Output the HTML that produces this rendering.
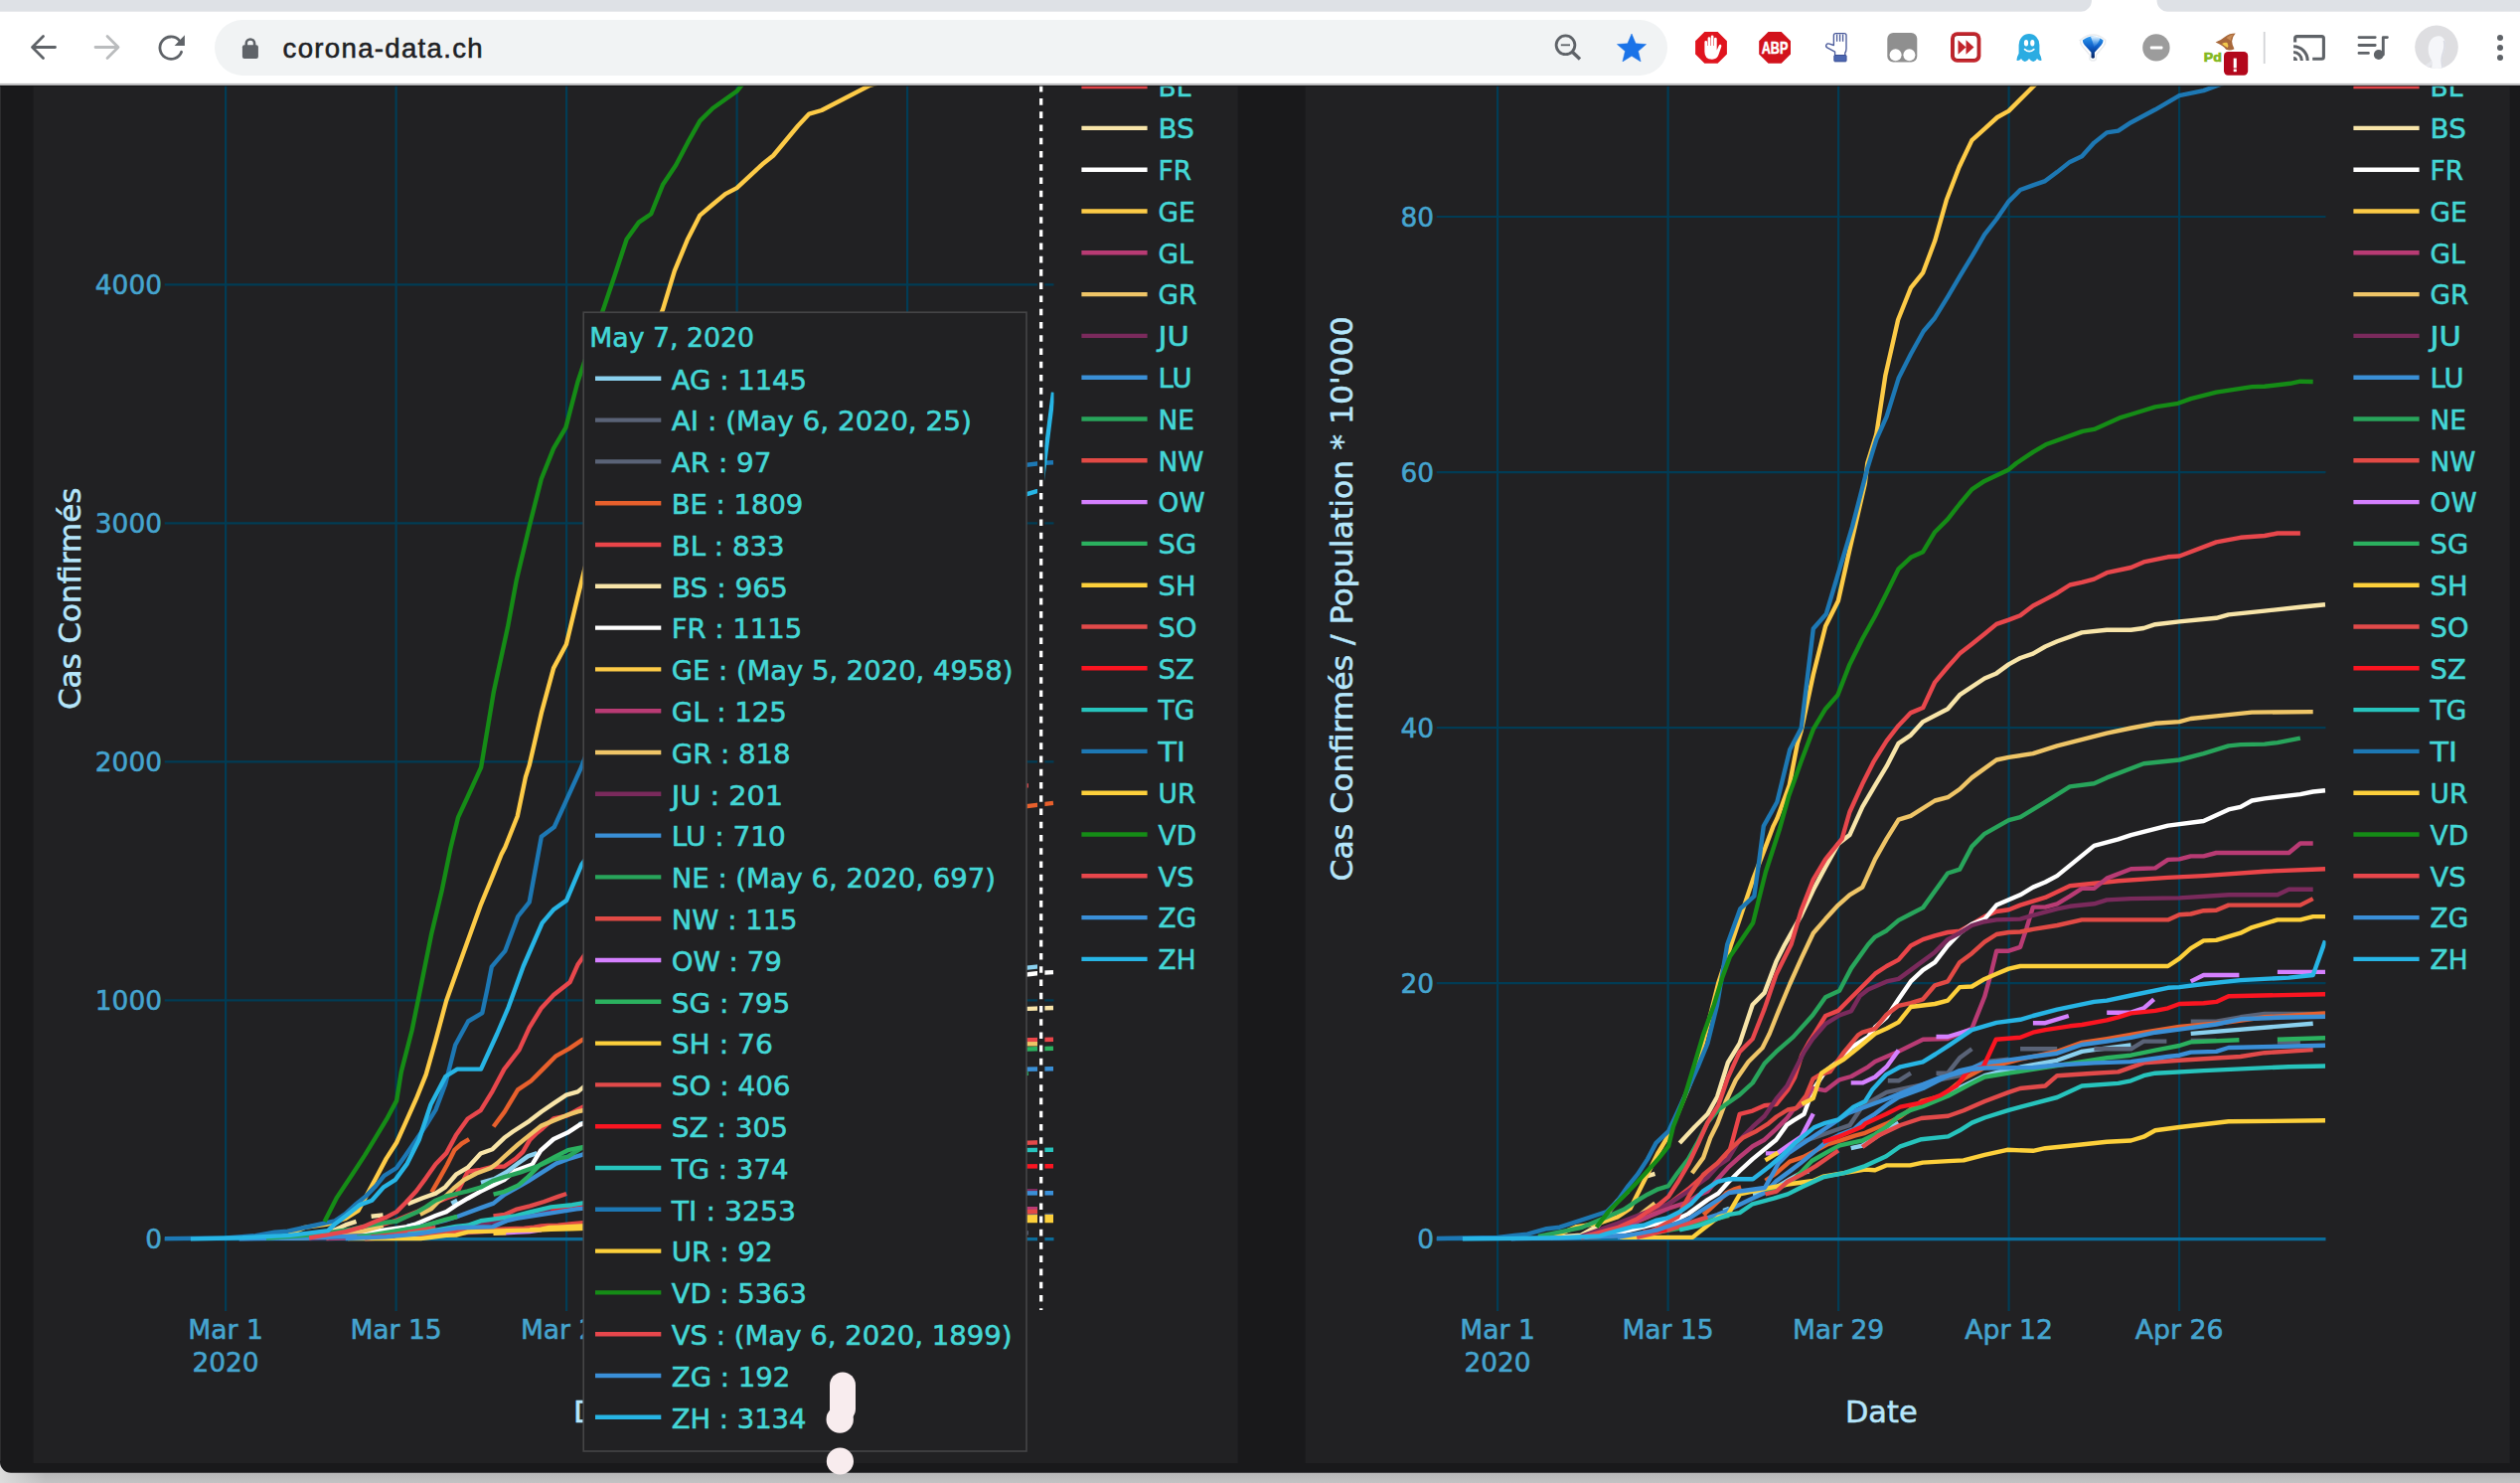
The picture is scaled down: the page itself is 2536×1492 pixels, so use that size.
<!DOCTYPE html>
<html lang="fr"><head><meta charset="utf-8"><title>corona-data.ch</title>
<style>html,body{margin:0;padding:0;background:#b9b9b9;}body{width:2536px;height:1492px;overflow:hidden;}svg{display:block;font-family:"DejaVu Sans", "Liberation Sans", sans-serif;}text{white-space:pre;}</style></head><body>
<svg width="2536" height="1492" viewBox="0 0 2536 1492">
<defs><linearGradient id="shadow" x1="0" y1="0" x2="0" y2="1"><stop offset="0" stop-color="#a6a6a7"/><stop offset="1" stop-color="#c3c3c4"/></linearGradient><linearGradient id="shl" x1="0" y1="0" x2="1" y2="0"><stop offset="0" stop-color="#dedede" stop-opacity="0.95"/><stop offset="1" stop-color="#dedede" stop-opacity="0"/></linearGradient><linearGradient id="fun" x1="0" y1="0" x2="0" y2="1"><stop offset="0" stop-color="#2f9df2"/><stop offset="0.5" stop-color="#0d5bc4"/><stop offset="1" stop-color="#06235f"/></linearGradient><linearGradient id="funhi" x1="0" y1="0" x2="0" y2="1"><stop offset="0" stop-color="#ffffff" stop-opacity="0.95"/><stop offset="1" stop-color="#8cc8ff" stop-opacity="0.1"/></linearGradient><clipPath id="clipabs"><rect x="165.7" y="85.8" width="894.8" height="1240"/></clipPath><clipPath id="cliprel"><rect x="1445.7" y="85.8" width="894.8" height="1240"/></clipPath></defs>
<rect x="0" y="1470" width="2536" height="22" fill="url(#shadow)"/>
<rect x="0" y="1462" width="46" height="30" fill="url(#shl)"/>
<path d="M0,85.8 H2536 V1481.7 H11 A11,11 0 0 1 0,1470.7 Z" fill="#19191b"/>
<rect x="0" y="85.8" width="0.9" height="1384" fill="#303033"/>
<rect x="33.6" y="85.8" width="1212.2" height="1386.2" fill="#212123"/>
<line x1="227.1" y1="85.8" x2="227.1" y2="1319" stroke="#013c55" stroke-width="2.2"/>
<line x1="398.6" y1="85.8" x2="398.6" y2="1319" stroke="#013c55" stroke-width="2.2"/>
<line x1="570.1" y1="85.8" x2="570.1" y2="1319" stroke="#013c55" stroke-width="2.2"/>
<line x1="741.6" y1="85.8" x2="741.6" y2="1319" stroke="#013c55" stroke-width="2.2"/>
<line x1="913.1" y1="85.8" x2="913.1" y2="1319" stroke="#013c55" stroke-width="2.2"/>
<line x1="165.7" y1="286.3" x2="1060.5" y2="286.3" stroke="#013c55" stroke-width="2.2"/>
<line x1="165.7" y1="526.3" x2="1060.5" y2="526.3" stroke="#013c55" stroke-width="2.2"/>
<line x1="165.7" y1="766.3" x2="1060.5" y2="766.3" stroke="#013c55" stroke-width="2.2"/>
<line x1="165.7" y1="1006.3" x2="1060.5" y2="1006.3" stroke="#013c55" stroke-width="2.2"/>
<line x1="165.7" y1="1246.6" x2="1060.5" y2="1246.6" stroke="#0b6d9b" stroke-width="3.1"/>
<g clip-path="url(#clipabs)" fill="none" stroke-width="4.4" stroke-linejoin="round" stroke-linecap="butt">
<polyline stroke="#8ad0ee" points="409.8,1233.6 421.7,1231.4"/>
<polyline stroke="#8ad0ee" points="454.3,1210.6 460.2,1207.7"/>
<polyline stroke="#8ad0ee" points="484.0,1189.9 497.3,1186.1 509.2,1179.5 521.1,1170.6 531.5,1163.1 540.4,1160.2"/>
<polyline stroke="#8ad0ee" points="582.7,1131.0 594.2,1127.8 630.6,1098.6"/>
<polyline stroke="#8ad0ee" points="667.2,1069.4 717.2,1038.6 741.5,1030.5 790.2,1019.1 815.1,1007.8 827.4,1005.5 864.5,999.7"/>
<polyline stroke="#8ad0ee" points="924.7,985.1 1047.7,972.1"/>
<polyline stroke="#5a6377" points="619.8,1241.5 630.6,1241.5 642.9,1241.3"/>
<polyline stroke="#5a6377" points="668.5,1241.3 680.1,1241.3 692.1,1240.8 704.4,1240.6"/>
<polyline stroke="#5a6377" points="753.1,1240.6 790.2,1240.6"/>
<polyline stroke="#5a6377" points="827.4,1240.6 864.5,1240.6 877.3,1240.3 900.4,1240.3"/>
<polyline stroke="#5a6377" points="924.7,1240.3 950.4,1240.3"/>
<polyline stroke="#5a6377" points="1011.9,1240.4 1034.9,1240.4"/>
<polyline stroke="#5a6377" points="521.2,1237.3 532.7,1236.3 544.8,1235.9 569.9,1234.9 581.4,1234.5 594.2,1232.6 618.6,1231.1 655.2,1230.3 667.2,1229.9 692.1,1229.4 717.2,1227.9 741.5,1227.7"/>
<polyline stroke="#5a6377" points="924.7,1223.8 950.4,1223.8 974.7,1223.3 999.0,1223.0 1060.0,1223.0"/>
<polyline stroke="#e8602c" points="311.1,1244.0 354.2,1239.0"/>
<polyline stroke="#e8602c" points="434.3,1199.5 442.4,1185.4 449.9,1172.0 457.3,1157.2 464.7,1150.5 472.1,1146.1"/>
<polyline stroke="#e8602c" points="496.6,1133.5 507.7,1118.6 521.1,1096.4 534.4,1087.5 546.3,1075.6 559.6,1062.3 573.0,1054.8 586.4,1045.9 597.0,1040.5 618.2,1022.8 632.4,1009.1 653.6,979.0 674.9,968.0 696.1,935.2 717.3,913.3 740.0,903.7 753.1,897.0 790.2,882.2 815.1,864.8 840.2,857.4 877.3,845.0 913.2,834.1 962.7,825.2 999.0,815.3 1060.0,807.9"/>
<polyline stroke="#ea4549" points="311.1,1245.5 347.7,1241.5 378.0,1234.5 399.1,1227.5 419.0,1219.4 438.4,1210.1 449.2,1205.4 458.9,1201.9 464.3,1191.5 470.7,1178.7 483.7,1177.0 495.6,1174.0 507.4,1173.5 519.1,1165.7 526.2,1158.8 533.3,1146.6 540.4,1139.7 546.0,1135.2 557.1,1125.5 569.9,1122.7 581.4,1116.5 594.2,1109.6 607.0,1102.7 618.6,1098.6 630.6,1095.1 642.9,1087.5 655.2,1084.1 667.2,1082.0 680.1,1080.2 692.1,1079.5 704.4,1075.8 717.2,1071.7 729.2,1068.9 741.5,1067.9 753.1,1065.4 778.2,1061.3 803.0,1055.1 827.4,1053.7 851.7,1052.3 901.7,1050.5 937.6,1049.6 999.0,1047.2 1060.0,1045.8"/>
<polyline stroke="#f8e5a9" points="280.8,1245.8 311.1,1245.0 328.3,1241.5 347.7,1232.4 358.5,1228.9"/>
<polyline stroke="#f8e5a9" points="373.6,1223.8 385.5,1222.4"/>
<polyline stroke="#f8e5a9" points="410.3,1211.2 425.4,1205.3 438.4,1200.6 448.1,1194.3 458.9,1181.7 470.7,1174.7 483.7,1160.5 495.6,1156.2 507.4,1144.8 516.1,1138.5 532.7,1127.8 544.8,1118.5 557.1,1110.1 569.9,1101.7 581.4,1098.4 594.2,1088.1 607.0,1080.2 618.6,1073.2 630.6,1064.8 642.9,1061.8 655.2,1056.9 680.1,1052.2 692.1,1047.1 717.2,1041.0 729.2,1039.2 741.5,1035.9 753.1,1033.6 765.9,1032.0 778.2,1029.4 790.2,1027.5 815.1,1024.2 840.2,1023.3 864.5,1023.3 877.3,1022.6 888.9,1021.3 913.2,1020.2 950.4,1018.9 962.7,1017.7 999.0,1016.3 1034.9,1014.9 1060.0,1014.0"/>
<polyline stroke="#ffffff" points="311.1,1245.5 347.7,1242.9 388.7,1237.1 408.2,1234.5 419.0,1231.3 438.4,1223.0 449.2,1219.1 458.9,1212.7 470.7,1205.7 483.7,1198.6 495.6,1192.8 507.4,1187.1 518.2,1178.1 524.7,1175.5 535.5,1171.7 544.1,1157.5 557.1,1146.0 571.1,1139.6 583.0,1131.9 600.0,1125.5 607.0,1119.8 618.6,1113.7 630.6,1103.0 642.9,1092.3 655.2,1085.5 667.2,1080.9 680.1,1071.0 692.1,1063.4 704.4,1058.1 717.2,1055.0 729.2,1046.6 753.1,1040.5 765.9,1036.0 778.2,1032.9 790.2,1029.1 827.4,1011.1 851.7,1007.3 864.5,1004.7 901.7,999.1 937.6,996.3 962.7,989.5 974.7,988.0 986.2,984.2 999.0,982.9 1034.9,980.3 1047.7,978.8 1060.0,978.1"/>
<polyline stroke="#fdcb47" points="280.8,1245.6 306.7,1234.9 328.3,1231.9 347.7,1225.9 360.7,1217.8 367.2,1205.8 378.0,1185.7 388.7,1165.6 399.1,1149.5 408.2,1129.4 419.0,1105.2 428.7,1081.1 438.4,1046.9 449.2,1006.7 462.1,970.5 484.1,909.6 496.9,878.6 504.6,859.5 508.4,852.3 520.7,821.3 528.9,781.9 532.7,769.9 544.8,717.4 557.1,672.1 569.9,648.2 581.4,600.5 596.8,538.4 599.3,519.3 608.3,492.3 617.3,437.4 623.7,411.1 630.1,384.9 642.9,355.0 655.2,340.7 667.2,310.9 678.8,272.7 691.6,241.6 704.4,216.6 717.2,205.8 730.0,195.1 741.5,189.1 767.2,165.3 778.2,156.5 803.1,126.5 814.3,114.6 826.8,111.0 875.5,85.8 924.5,72.7 973.4,63.1 1022.3,56.4"/>
<polyline stroke="#b93b74" points="328.3,1246.0 347.7,1245.6 367.2,1245.0 388.7,1244.3 399.1,1244.0 419.0,1243.5 428.7,1243.0 438.4,1242.7 449.2,1241.7 458.9,1240.9 470.7,1240.1 483.7,1239.3 495.6,1238.8 507.4,1238.0 518.2,1237.2 524.7,1236.5 535.5,1236.0 544.1,1234.9 557.1,1235.0 571.1,1234.2 583.0,1234.0 600.0,1233.3 607.0,1232.9 618.6,1232.5 630.6,1232.1 655.2,1231.2 680.1,1231.1 692.1,1230.7 704.4,1230.3 717.2,1227.9 723.6,1226.2 729.2,1224.5 741.5,1224.5 753.1,1224.2 759.5,1222.7 765.9,1221.1 778.2,1221.1 790.2,1220.9 803.0,1220.3 815.1,1219.7 827.4,1219.7 840.2,1218.9 864.5,1218.2 888.9,1218.2 901.7,1217.5 913.2,1217.5 924.7,1217.3 937.6,1217.3 950.4,1217.0 1023.4,1217.0 1034.9,1216.3 1047.7,1216.3"/>
<polyline stroke="#efc567" points="328.3,1245.4 347.7,1242.2 367.2,1238.2 385.5,1233.0"/>
<polyline stroke="#efc567" points="422.8,1221.9 434.2,1216.1 441.2,1208.8 448.3,1203.5 456.8,1195.2 466.7,1187.3 479.5,1180.5 493.6,1175.3 500.7,1170.0 508.4,1162.9 521.2,1151.5 532.7,1142.1 544.8,1132.6 557.1,1127.4 569.9,1122.2 581.4,1118.4 594.2,1115.5 607.0,1105.1 618.6,1097.5 630.6,1090.4 642.9,1089.0 667.2,1083.3 680.1,1082.1 692.1,1079.1 704.4,1074.8 729.2,1068.2 741.5,1067.2 765.9,1065.8 790.2,1063.0 840.2,1058.2 864.5,1056.3 888.9,1054.6 913.2,1054.0 924.7,1052.8 950.4,1051.9 986.2,1050.5 1047.7,1050.3"/>
<polyline stroke="#7a2a5c" points="311.1,1246.0 347.7,1244.2 378.0,1242.6 399.1,1241.5 419.0,1239.8 438.4,1237.8 449.2,1236.2 458.9,1235.3 470.7,1232.7 483.7,1230.9 495.6,1229.4 507.4,1227.1 518.2,1225.3 524.7,1223.5 535.5,1220.6 544.1,1218.8 557.1,1216.7 571.1,1215.5 583.0,1214.9 591.6,1212.9 600.0,1212.0 607.0,1211.6 618.6,1210.9 630.6,1210.5 642.9,1209.3 667.2,1206.8 680.1,1205.1 692.1,1204.2 704.4,1203.2 717.2,1202.6 729.2,1202.4 753.1,1202.3 765.9,1201.8 790.2,1200.9 803.0,1200.5 827.4,1200.2 840.2,1199.6 864.5,1199.5 913.2,1199.4 962.7,1198.9 1011.9,1198.9 1023.4,1198.2 1047.7,1198.2"/>
<polyline stroke="#3a8fd6" points="240.7,1246.2 300.0,1245.5 374.2,1243.3 397.9,1238.8 421.7,1234.4 448.4,1227.7 460.2,1224.0 484.0,1215.1 496.6,1210.6 507.7,1201.7 521.1,1194.3 531.5,1188.4 543.3,1180.9 559.6,1170.6 571.5,1166.1 586.4,1161.7 594.2,1156.0 607.0,1150.1 618.6,1143.2 630.6,1137.4 655.2,1130.5 680.1,1120.7 692.1,1116.8 704.4,1114.8 717.2,1110.9 729.2,1109.9 765.9,1106.0 790.2,1103.4 815.1,1096.8 840.2,1094.2 864.5,1091.3 888.9,1087.3 913.2,1085.0 950.4,1081.1 974.7,1077.1 1011.9,1076.0 1060.0,1075.2"/>
<polyline stroke="#28a55b" points="267.9,1245.5 311.1,1242.6 337.0,1239.1 354.2,1236.6 367.2,1233.7 378.0,1231.6 388.7,1229.8 399.1,1228.7 408.2,1224.4 419.0,1219.8 428.7,1214.1 438.4,1207.7 449.2,1203.4 470.7,1198.4 483.7,1194.5 495.6,1188.1 507.4,1184.1 524.7,1179.1 544.1,1172.0 557.1,1166.0 571.1,1163.8 583.0,1156.3 600.0,1148.5 607.0,1145.9 618.6,1143.8 630.6,1140.4 642.9,1138.3 655.2,1136.2 680.1,1124.8 692.1,1123.5 704.4,1115.9 717.2,1111.6 741.5,1107.1 753.1,1106.1 778.2,1101.0 803.0,1096.0 827.4,1094.9 840.2,1093.0 877.3,1088.3 913.2,1087.1 937.6,1085.0 962.7,1082.4 974.7,1082.0 999.0,1081.8 1011.9,1081.3 1034.9,1079.9"/>
<polyline stroke="#e24a45" points="367.2,1246.2 388.7,1245.4 408.2,1244.5 420.0,1242.8 434.2,1241.1 448.3,1240.2 461.1,1239.1 473.8,1238.1 488.0,1237.6 499.3,1237.0 507.8,1236.4 519.1,1235.9 527.6,1235.8 537.5,1234.7 544.6,1233.4 551.7,1233.0 561.6,1232.8 575.8,1231.2 589.9,1229.9 594.2,1229.6 607.0,1229.3 618.6,1228.2 630.6,1227.5 642.9,1227.3 655.2,1227.0 667.2,1225.8 680.1,1225.5 692.1,1224.0 704.4,1223.3 717.2,1222.3 729.2,1221.7 741.5,1221.5 753.1,1221.5 765.9,1221.3 790.2,1221.0 815.1,1220.5 901.7,1220.5 913.2,1220.1 924.7,1220.1 937.6,1219.8 950.4,1219.8 962.7,1219.3 1034.9,1219.3 1047.7,1218.8"/>
<polyline stroke="#d580ff" points="496.9,1240.2 508.4,1240.2 521.2,1239.6 532.7,1239.1 544.8,1237.4"/>
<polyline stroke="#d580ff" points="582.7,1235.2 594.2,1235.2 607.0,1234.8 618.6,1234.1 630.6,1232.9"/>
<polyline stroke="#d580ff" points="668.5,1232.0 680.1,1232.0 703.1,1231.5"/>
<polyline stroke="#d580ff" points="765.9,1231.0 778.2,1231.0 801.8,1230.5"/>
<polyline stroke="#d580ff" points="840.2,1230.2 864.5,1230.2 877.3,1229.9 887.6,1229.3"/>
<polyline stroke="#d580ff" points="924.7,1228.0 937.6,1227.6 973.4,1227.6"/>
<polyline stroke="#d580ff" points="1011.9,1227.4 1060.0,1227.4"/>
<polyline stroke="#2bb15f" points="359.3,1244.7 423.1,1234.4 433.5,1231.4 448.4,1226.9 460.2,1224.0"/>
<polyline stroke="#2bb15f" points="496.6,1201.7 507.7,1198.8 521.1,1192.8 531.5,1183.9 543.3,1172.0 559.6,1163.1 571.5,1157.2 586.4,1154.2 594.2,1152.6 607.0,1146.6 618.6,1139.3 630.6,1129.5 642.9,1123.5 655.2,1119.8 680.1,1110.1 704.4,1098.0 717.2,1091.9 741.5,1088.2 765.9,1084.6 790.2,1080.9 815.1,1077.3 840.2,1073.7 864.5,1071.2 888.9,1066.4 913.2,1062.0 924.7,1058.6 973.4,1056.6"/>
<polyline stroke="#2bb15f" points="1011.9,1056.2 1060.0,1054.7"/>
<polyline stroke="#fdd03b" points="349.9,1246.1 423.3,1246.1 434.1,1244.8 449.2,1242.9 458.9,1242.6 471.0,1239.4 496.5,1238.6 519.1,1237.9 544.6,1237.4 554.5,1236.7 575.8,1236.2 597.0,1235.6 606.9,1235.7 618.2,1235.0 642.3,1235.0 655.0,1234.6 680.5,1234.3 696.1,1234.2 717.3,1233.4 740.0,1232.6 765.9,1232.7 778.2,1232.4 803.0,1232.0 840.2,1231.4 864.5,1231.2 877.3,1230.6 888.9,1229.6 913.2,1229.1 962.7,1228.2 1060.0,1228.1"/>
<polyline stroke="#e24a4a" points="367.2,1245.6 399.1,1241.7 438.4,1235.1"/>
<polyline stroke="#e24a4a" points="496.5,1223.4 507.8,1222.0 519.1,1216.9 533.3,1213.3 547.4,1209.0 561.6,1203.9 570.1,1201.0"/>
<polyline stroke="#e24a4a" points="594.2,1199.2 611.2,1193.1 632.4,1188.1 653.6,1184.4 680.5,1183.4 696.1,1180.5 717.3,1175.8 741.5,1171.1 753.1,1169.2 778.2,1167.9 790.2,1162.7 827.4,1161.4 851.7,1160.7 877.3,1156.1 913.2,1154.8 974.7,1152.9 999.0,1150.9 1047.7,1149.3"/>
<polyline stroke="#fb1521" points="373.6,1244.3 397.4,1243.6"/>
<polyline stroke="#fb1521" points="554.5,1217.4 569.9,1215.8 594.2,1212.8 597.0,1212.0 618.2,1209.0 632.4,1206.9 653.6,1205.7 672.0,1203.6 689.0,1200.6 700.4,1196.2 715.9,1194.9 728.7,1186.7 753.1,1186.2 765.9,1184.7 778.2,1183.9 803.0,1182.8 815.1,1182.4 840.2,1181.0 851.7,1180.1 864.5,1179.0 888.9,1178.2 901.7,1177.4 913.2,1176.1 937.6,1175.9 950.4,1175.5 962.7,1173.9 1060.0,1173.2"/>
<polyline stroke="#27c4bd" points="410.3,1241.7 429.7,1239.5 458.9,1233.9 470.7,1232.8 483.7,1228.3 505.0,1225.4 519.1,1223.2 533.3,1219.5 554.5,1214.4 575.8,1212.2 597.0,1208.6 618.2,1203.5 632.4,1198.4 653.6,1194.7 680.5,1193.3 692.1,1190.1 704.4,1186.2 717.2,1183.5 741.5,1179.6 765.9,1176.3 790.2,1173.0 815.1,1167.0 851.7,1165.7 864.5,1164.4 877.3,1161.7 888.9,1160.4 937.6,1159.1 1023.4,1157.1 1060.0,1156.7"/>
<polyline stroke="#1d78b4" points="165.4,1246.1 227.3,1245.4 257.1,1243.2 276.5,1239.7 289.5,1238.7 311.1,1234.0 337.0,1228.3 347.7,1221.2 358.5,1211.2 368.2,1203.4 378.0,1193.4 386.6,1182.8 399.1,1175.0 408.2,1162.2 419.0,1146.5 428.7,1132.3 438.4,1116.6 448.1,1091.0 453.5,1069.7 458.2,1051.2 471.2,1027.5 485.3,1019.1 490.5,994.6 494.8,972.7 508.4,956.6 521.2,922.0 532.7,907.6 538.6,875.5 544.8,841.8 557.8,832.0 569.4,806.3 584.0,774.2 599.3,735.4 608.3,716.3 618.6,701.1 630.6,675.8 642.9,659.7 655.7,644.5 667.2,635.6 680.1,621.7 692.9,607.4 704.9,594.4 717.2,580.3 729.2,570.2 741.5,558.4 753.1,550.8 765.9,547.7 778.2,544.9 790.2,539.0 803.0,532.2 815.1,528.5 827.4,519.5 840.2,512.8 851.7,511.6 864.5,506.0 888.9,497.6 913.2,488.3 937.6,484.9 951.6,481.6 974.7,476.5 999.0,472.3 1023.4,468.9 1047.7,466.0 1060.0,465.3"/>
<polyline stroke="#fdd03b" points="496.5,1240.9 509.2,1240.4"/>
<polyline stroke="#fdd03b" points="533.3,1237.1 544.6,1236.7 553.1,1235.0 561.6,1234.6 575.8,1234.0 589.9,1233.2 606.9,1232.3 618.6,1231.9 630.6,1231.5 642.9,1230.4 667.2,1230.2 680.1,1230.0 692.1,1229.1 704.4,1229.1 717.2,1228.5 729.2,1228.2 741.5,1227.8 753.1,1227.7 901.7,1227.7 913.2,1227.1 924.7,1226.4 937.6,1225.9 950.4,1225.9 974.7,1225.4 986.2,1225.0 1011.9,1224.5 1034.9,1224.5 1047.7,1224.3 1060.0,1224.3"/>
<polyline stroke="#158c16" points="326.6,1229.0 339.1,1204.6 354.2,1182.0 367.2,1162.1 378.0,1144.4 388.7,1126.7 399.1,1107.4 403.8,1078.4 414.6,1036.5 424.4,988.2 434.1,940.0 444.9,894.9 453.5,853.0 461.0,822.4 470.7,801.5 484.1,772.2 496.9,695.7 511.0,630.8 519.9,582.9 532.7,529.4 544.8,481.7 557.1,451.1 569.4,430.1 581.4,384.2 594.2,346.0 607.0,311.6 618.6,277.2 630.6,240.8 642.9,223.6 655.2,215.2 667.2,185.4 680.1,166.3 692.1,143.4 704.4,121.6 717.2,109.0 741.5,91.8 749.2,82.2 765.9,65.7 778.7,54.3 815.8,34.4 827.4,31.3 853.0,14.1 865.8,8.4 888.9,-2.3 911.9,-7.7 924.7,-14.5 950.4,-24.1 986.2,-32.5 999.0,-32.9 1024.7,-37.5 1034.9,-40.5 1047.7,-40.1"/>
<polyline stroke="#e8474c" points="311.1,1245.4 347.7,1239.1 367.2,1233.6 378.0,1228.8 388.7,1224.6 399.1,1219.1 408.2,1210.0 419.0,1198.3 428.7,1185.1 438.4,1171.2 449.2,1160.1 458.9,1142.1 470.7,1125.5 483.7,1117.2 495.6,1097.8 507.4,1075.6 522.5,1056.2 532.7,1033.9 544.8,1014.2 557.1,1001.0 573.7,987.9 581.4,970.6 594.2,952.5 605.8,937.7 618.6,924.5 630.6,914.6 642.9,906.4 655.2,903.1 667.2,886.6 680.1,876.8 692.1,868.2 704.4,862.0 717.2,855.4 729.2,849.1 741.5,846.3 753.1,843.5 765.9,837.3 778.2,833.2 790.2,829.0 803.0,823.8 815.1,822.1 827.4,820.0 840.2,815.9 864.5,812.6 877.3,809.0 901.7,805.7 913.2,805.2 950.4,796.1 974.7,793.2 999.0,792.0 1011.9,790.4 1034.9,790.4"/>
<polyline stroke="#3a8fd8" points="347.7,1246.0 388.7,1244.2 419.0,1241.6 460.0,1235.3 496.0,1234.1 510.0,1228.2 520.0,1225.8 550.0,1221.1 580.0,1216.4 620.0,1212.8 670.0,1208.1 704.4,1205.9 717.2,1205.6 765.9,1205.4 790.2,1204.8 827.4,1204.4 864.5,1204.0 901.7,1202.8 913.2,1202.5 924.7,1201.8 950.4,1201.6 962.7,1200.7 1060.0,1200.2"/>
<polyline stroke="#27b5e5" points="191.9,1246.4 244.3,1245.2 291.9,1242.9 330.0,1238.1 337.1,1231.4 349.0,1222.5 362.3,1212.1 374.2,1207.7 386.1,1194.3 397.9,1186.9 409.8,1170.6 421.7,1146.8 433.5,1111.2 448.4,1083.0 460.2,1075.6 484.0,1075.6 500.3,1040.0 511.6,1013.6 526.7,972.0 545.6,928.6 556.9,915.3 570.1,905.9 585.2,870.0 597.0,853.4 604.1,821.3 618.2,777.0 632.4,754.9 655.0,740.9 667.8,718.7 681.9,692.6 704.4,649.3 729.2,629.0 753.1,620.2 765.9,609.3 790.2,591.1 827.4,569.3 840.2,565.7 864.5,551.1 901.7,529.3 913.2,527.1 937.6,518.4 974.7,507.5 1023.4,500.2 1047.7,492.9 1060.0,394.7"/>
</g>
<text x="163.0" y="296.1" font-size="26.4" fill="#45a4cf" stroke="#45a4cf" stroke-width="0.55" text-anchor="end" textLength="67.2" lengthAdjust="spacingAndGlyphs">4000</text>
<text x="163.0" y="536.1" font-size="26.4" fill="#45a4cf" stroke="#45a4cf" stroke-width="0.55" text-anchor="end" textLength="67.2" lengthAdjust="spacingAndGlyphs">3000</text>
<text x="163.0" y="776.1" font-size="26.4" fill="#45a4cf" stroke="#45a4cf" stroke-width="0.55" text-anchor="end" textLength="67.2" lengthAdjust="spacingAndGlyphs">2000</text>
<text x="163.0" y="1016.1" font-size="26.4" fill="#45a4cf" stroke="#45a4cf" stroke-width="0.55" text-anchor="end" textLength="67.2" lengthAdjust="spacingAndGlyphs">1000</text>
<text x="163.0" y="1256.1" font-size="26.4" fill="#45a4cf" stroke="#45a4cf" stroke-width="0.55" text-anchor="end">0</text>
<text x="227.1" y="1346.6" font-size="26.4" fill="#45a4cf" stroke="#45a4cf" stroke-width="0.55" text-anchor="middle" textLength="75.5" lengthAdjust="spacingAndGlyphs">Mar 1</text>
<text x="398.6" y="1346.6" font-size="26.4" fill="#45a4cf" stroke="#45a4cf" stroke-width="0.55" text-anchor="middle" textLength="92.3" lengthAdjust="spacingAndGlyphs">Mar 15</text>
<text x="570.1" y="1346.6" font-size="26.4" fill="#45a4cf" stroke="#45a4cf" stroke-width="0.55" text-anchor="middle" textLength="92.3" lengthAdjust="spacingAndGlyphs">Mar 29</text>
<text x="741.6" y="1346.6" font-size="26.4" fill="#45a4cf" stroke="#45a4cf" stroke-width="0.55" text-anchor="middle" textLength="88.7" lengthAdjust="spacingAndGlyphs">Apr 12</text>
<text x="913.1" y="1346.6" font-size="26.4" fill="#45a4cf" stroke="#45a4cf" stroke-width="0.55" text-anchor="middle" textLength="88.7" lengthAdjust="spacingAndGlyphs">Apr 26</text>
<text x="227.0" y="1380.2" font-size="26.4" fill="#45a4cf" stroke="#45a4cf" stroke-width="0.55" text-anchor="middle" textLength="67.2" lengthAdjust="spacingAndGlyphs">2020</text>
<text x="613.3" y="1431.3" font-size="30.8" fill="#b5e6fb" stroke="#b5e6fb" stroke-width="0.55" text-anchor="middle" textLength="72.7" lengthAdjust="spacingAndGlyphs">Date</text>
<text x="0.0" y="0.0" font-size="30.8" fill="#b5e6fb" stroke="#b5e6fb" stroke-width="0.55" text-anchor="middle" textLength="223.4" lengthAdjust="spacingAndGlyphs" transform="translate(81.2,602.4) rotate(-90)">Cas Confirmés</text>
<line x1="1088.4" y1="87.1" x2="1154.6" y2="87.1" stroke="#ea4549" stroke-width="4.4"/>
<text x="1165.6" y="97.4" font-size="26.4" fill="#44d7d6" stroke="#44d7d6" stroke-width="0.55" text-anchor="start" textLength="32.8" lengthAdjust="spacingAndGlyphs">BL</text>
<line x1="1088.4" y1="128.9" x2="1154.6" y2="128.9" stroke="#f8e5a9" stroke-width="4.4"/>
<text x="1165.6" y="139.2" font-size="26.4" fill="#44d7d6" stroke="#44d7d6" stroke-width="0.55" text-anchor="start" textLength="36.2" lengthAdjust="spacingAndGlyphs">BS</text>
<line x1="1088.4" y1="170.7" x2="1154.6" y2="170.7" stroke="#ffffff" stroke-width="4.4"/>
<text x="1165.6" y="181.0" font-size="26.4" fill="#44d7d6" stroke="#44d7d6" stroke-width="0.55" text-anchor="start" textLength="33.5" lengthAdjust="spacingAndGlyphs">FR</text>
<line x1="1088.4" y1="212.5" x2="1154.6" y2="212.5" stroke="#fdcb47" stroke-width="4.4"/>
<text x="1165.6" y="222.8" font-size="26.4" fill="#44d7d6" stroke="#44d7d6" stroke-width="0.55" text-anchor="start" textLength="37.1" lengthAdjust="spacingAndGlyphs">GE</text>
<line x1="1088.4" y1="254.3" x2="1154.6" y2="254.3" stroke="#b93b74" stroke-width="4.4"/>
<text x="1165.6" y="264.6" font-size="26.4" fill="#44d7d6" stroke="#44d7d6" stroke-width="0.55" text-anchor="start" textLength="35.2" lengthAdjust="spacingAndGlyphs">GL</text>
<line x1="1088.4" y1="296.1" x2="1154.6" y2="296.1" stroke="#efc567" stroke-width="4.4"/>
<text x="1165.6" y="306.4" font-size="26.4" fill="#44d7d6" stroke="#44d7d6" stroke-width="0.55" text-anchor="start" textLength="38.8" lengthAdjust="spacingAndGlyphs">GR</text>
<line x1="1088.4" y1="337.9" x2="1154.6" y2="337.9" stroke="#7a2a5c" stroke-width="4.4"/>
<text x="1165.6" y="348.2" font-size="26.4" fill="#44d7d6" stroke="#44d7d6" stroke-width="0.55" text-anchor="start" textLength="31.3" lengthAdjust="spacingAndGlyphs">JU</text>
<line x1="1088.4" y1="379.7" x2="1154.6" y2="379.7" stroke="#3a8fd6" stroke-width="4.4"/>
<text x="1165.6" y="390.0" font-size="26.4" fill="#44d7d6" stroke="#44d7d6" stroke-width="0.55" text-anchor="start" textLength="34.0" lengthAdjust="spacingAndGlyphs">LU</text>
<line x1="1088.4" y1="421.5" x2="1154.6" y2="421.5" stroke="#28a55b" stroke-width="4.4"/>
<text x="1165.6" y="431.8" font-size="26.4" fill="#44d7d6" stroke="#44d7d6" stroke-width="0.55" text-anchor="start" textLength="36.4" lengthAdjust="spacingAndGlyphs">NE</text>
<line x1="1088.4" y1="463.3" x2="1154.6" y2="463.3" stroke="#e24a45" stroke-width="4.4"/>
<text x="1165.6" y="473.6" font-size="26.4" fill="#44d7d6" stroke="#44d7d6" stroke-width="0.55" text-anchor="start" textLength="45.9" lengthAdjust="spacingAndGlyphs">NW</text>
<line x1="1088.4" y1="505.1" x2="1154.6" y2="505.1" stroke="#d580ff" stroke-width="4.4"/>
<text x="1165.6" y="515.4" font-size="26.4" fill="#44d7d6" stroke="#44d7d6" stroke-width="0.55" text-anchor="start" textLength="46.9" lengthAdjust="spacingAndGlyphs">OW</text>
<line x1="1088.4" y1="546.9" x2="1154.6" y2="546.9" stroke="#2bb15f" stroke-width="4.4"/>
<text x="1165.6" y="557.2" font-size="26.4" fill="#44d7d6" stroke="#44d7d6" stroke-width="0.55" text-anchor="start" textLength="38.5" lengthAdjust="spacingAndGlyphs">SG</text>
<line x1="1088.4" y1="588.7" x2="1154.6" y2="588.7" stroke="#fdd03b" stroke-width="4.4"/>
<text x="1165.6" y="599.0" font-size="26.4" fill="#44d7d6" stroke="#44d7d6" stroke-width="0.55" text-anchor="start" textLength="37.9" lengthAdjust="spacingAndGlyphs">SH</text>
<line x1="1088.4" y1="630.5" x2="1154.6" y2="630.5" stroke="#e24a4a" stroke-width="4.4"/>
<text x="1165.6" y="640.8" font-size="26.4" fill="#44d7d6" stroke="#44d7d6" stroke-width="0.55" text-anchor="start" textLength="38.8" lengthAdjust="spacingAndGlyphs">SO</text>
<line x1="1088.4" y1="672.3" x2="1154.6" y2="672.3" stroke="#fb1521" stroke-width="4.4"/>
<text x="1165.6" y="682.6" font-size="26.4" fill="#44d7d6" stroke="#44d7d6" stroke-width="0.55" text-anchor="start" textLength="36.1" lengthAdjust="spacingAndGlyphs">SZ</text>
<line x1="1088.4" y1="714.1" x2="1154.6" y2="714.1" stroke="#27c4bd" stroke-width="4.4"/>
<text x="1165.6" y="724.4" font-size="26.4" fill="#44d7d6" stroke="#44d7d6" stroke-width="0.55" text-anchor="start" textLength="36.7" lengthAdjust="spacingAndGlyphs">TG</text>
<line x1="1088.4" y1="755.9" x2="1154.6" y2="755.9" stroke="#1d78b4" stroke-width="4.4"/>
<text x="1165.6" y="766.2" font-size="26.4" fill="#44d7d6" stroke="#44d7d6" stroke-width="0.55" text-anchor="start" textLength="27.4" lengthAdjust="spacingAndGlyphs">TI</text>
<line x1="1088.4" y1="797.7" x2="1154.6" y2="797.7" stroke="#fdd03b" stroke-width="4.4"/>
<text x="1165.6" y="808.0" font-size="26.4" fill="#44d7d6" stroke="#44d7d6" stroke-width="0.55" text-anchor="start" textLength="37.7" lengthAdjust="spacingAndGlyphs">UR</text>
<line x1="1088.4" y1="839.5" x2="1154.6" y2="839.5" stroke="#158c16" stroke-width="4.4"/>
<text x="1165.6" y="849.8" font-size="26.4" fill="#44d7d6" stroke="#44d7d6" stroke-width="0.55" text-anchor="start" textLength="38.4" lengthAdjust="spacingAndGlyphs">VD</text>
<line x1="1088.4" y1="881.3" x2="1154.6" y2="881.3" stroke="#e8474c" stroke-width="4.4"/>
<text x="1165.6" y="891.6" font-size="26.4" fill="#44d7d6" stroke="#44d7d6" stroke-width="0.55" text-anchor="start" textLength="36.1" lengthAdjust="spacingAndGlyphs">VS</text>
<line x1="1088.4" y1="923.1" x2="1154.6" y2="923.1" stroke="#3a8fd8" stroke-width="4.4"/>
<text x="1165.6" y="933.4" font-size="26.4" fill="#44d7d6" stroke="#44d7d6" stroke-width="0.55" text-anchor="start" textLength="38.5" lengthAdjust="spacingAndGlyphs">ZG</text>
<line x1="1088.4" y1="964.9" x2="1154.6" y2="964.9" stroke="#27b5e5" stroke-width="4.4"/>
<text x="1165.6" y="975.2" font-size="26.4" fill="#44d7d6" stroke="#44d7d6" stroke-width="0.55" text-anchor="start" textLength="37.9" lengthAdjust="spacingAndGlyphs">ZH</text>
<rect x="1313.6" y="85.8" width="1212.2000000000003" height="1386.2" fill="#212123"/>
<line x1="1507.1" y1="85.8" x2="1507.1" y2="1319" stroke="#013c55" stroke-width="2.2"/>
<line x1="1678.6" y1="85.8" x2="1678.6" y2="1319" stroke="#013c55" stroke-width="2.2"/>
<line x1="1850.1" y1="85.8" x2="1850.1" y2="1319" stroke="#013c55" stroke-width="2.2"/>
<line x1="2021.6" y1="85.8" x2="2021.6" y2="1319" stroke="#013c55" stroke-width="2.2"/>
<line x1="2193.1" y1="85.8" x2="2193.1" y2="1319" stroke="#013c55" stroke-width="2.2"/>
<line x1="1445.7" y1="218.0" x2="2340.5" y2="218.0" stroke="#013c55" stroke-width="2.2"/>
<line x1="1445.7" y1="475.1" x2="2340.5" y2="475.1" stroke="#013c55" stroke-width="2.2"/>
<line x1="1445.7" y1="732.1" x2="2340.5" y2="732.1" stroke="#013c55" stroke-width="2.2"/>
<line x1="1445.7" y1="989.2" x2="2340.5" y2="989.2" stroke="#013c55" stroke-width="2.2"/>
<line x1="1445.7" y1="1246.6" x2="2340.5" y2="1246.6" stroke="#0b6d9b" stroke-width="3.1"/>
<g clip-path="url(#cliprel)" fill="none" stroke-width="4.4" stroke-linejoin="round" stroke-linecap="butt">
<polyline stroke="#8ad0ee" points="1689.8,1236.3 1701.7,1234.5"/>
<polyline stroke="#8ad0ee" points="1734.3,1218.1 1740.2,1215.8"/>
<polyline stroke="#8ad0ee" points="1764.0,1201.7 1777.3,1198.8 1789.2,1193.5 1801.1,1186.5 1811.5,1180.6 1820.4,1178.3"/>
<polyline stroke="#8ad0ee" points="1862.7,1155.2 1874.2,1152.7 1910.6,1129.6"/>
<polyline stroke="#8ad0ee" points="1947.2,1106.6 1997.2,1082.2 2021.5,1075.8 2070.2,1066.8 2095.1,1057.9 2107.4,1056.1 2144.5,1051.5"/>
<polyline stroke="#8ad0ee" points="2204.7,1039.9 2327.7,1029.7"/>
<polyline stroke="#5a6377" points="1899.8,1087.3 1910.6,1087.3 1922.9,1079.7"/>
<polyline stroke="#5a6377" points="1948.5,1079.7 1960.1,1079.7 1972.1,1064.3 1984.4,1055.3"/>
<polyline stroke="#5a6377" points="2033.1,1055.3 2070.2,1055.3"/>
<polyline stroke="#5a6377" points="2107.4,1055.3 2144.5,1055.3 2157.3,1047.6 2180.4,1047.6"/>
<polyline stroke="#5a6377" points="2204.7,1046.9 2230.4,1046.9"/>
<polyline stroke="#5a6377" points="2291.9,1048.4 2314.9,1048.4"/>
<polyline stroke="#5a6377" points="1801.2,1159.1 1812.7,1148.8 1824.8,1145.0 1849.9,1136.0 1861.4,1132.2 1874.2,1113.0 1898.6,1098.9 1935.2,1091.2 1947.2,1087.3 1972.1,1082.2 1997.2,1068.1 2021.5,1065.6"/>
<polyline stroke="#5a6377" points="2204.7,1027.6 2230.4,1027.6 2254.7,1023.3 2279.0,1020.0 2340.0,1020.0"/>
<polyline stroke="#e8602c" points="1591.1,1245.1 1634.2,1242.5"/>
<polyline stroke="#e8602c" points="1714.3,1222.1 1722.4,1214.8 1729.9,1207.9 1737.3,1200.2 1744.7,1196.7 1752.1,1194.4"/>
<polyline stroke="#e8602c" points="1776.6,1187.9 1787.7,1180.2 1801.1,1168.7 1814.4,1164.1 1826.3,1158.0 1839.6,1151.1 1853.0,1147.2 1866.4,1142.6 1877.0,1139.8 1898.2,1130.6 1912.4,1123.5 1933.6,1108.0 1954.9,1102.3 1976.1,1085.3 1997.3,1074.0 2020.0,1069.0 2033.1,1065.6 2070.2,1057.9 2095.1,1048.9 2120.2,1045.1 2157.3,1038.7 2193.2,1033.0 2242.7,1028.4 2279.0,1023.3 2340.0,1019.4"/>
<polyline stroke="#ea4549" points="1591.1,1244.9 1627.7,1237.3 1658.0,1224.4 1679.1,1211.4 1699.0,1196.3 1718.4,1179.1 1729.2,1170.4 1738.9,1164.0 1744.3,1144.5 1750.7,1120.8 1763.7,1117.6 1775.6,1112.2 1787.4,1111.1 1799.1,1096.6 1806.2,1083.9 1813.3,1061.2 1820.4,1048.5 1826.0,1040.0 1837.1,1022.0 1849.9,1016.9 1861.4,1005.3 1874.2,992.5 1887.0,979.7 1898.6,972.0 1910.6,965.6 1922.9,951.5 1935.2,945.1 1947.2,941.3 1960.1,938.0 1972.1,936.7 1984.4,929.8 1997.2,922.1 2009.2,917.0 2021.5,915.2 2033.1,910.6 2058.2,902.9 2083.0,891.3 2107.4,888.8 2131.7,886.2 2181.7,882.9 2217.6,881.1 2279.0,876.7 2340.0,874.2"/>
<polyline stroke="#f8e5a9" points="1560.8,1244.9 1591.1,1242.7 1608.3,1233.0 1627.7,1208.2 1638.5,1198.5"/>
<polyline stroke="#f8e5a9" points="1653.6,1184.5 1665.5,1180.8"/>
<polyline stroke="#f8e5a9" points="1690.3,1149.9 1705.4,1133.7 1718.4,1120.8 1728.1,1103.5 1738.9,1069.0 1750.7,1049.6 1763.7,1010.7 1775.6,998.9 1787.4,967.6 1796.1,950.3 1812.7,920.8 1824.8,895.2 1837.1,872.1 1849.9,849.1 1861.4,840.1 1874.2,811.9 1887.0,790.1 1898.6,770.9 1910.6,747.8 1922.9,739.6 1935.2,726.1 1960.1,713.2 1972.1,699.2 1997.2,682.5 2009.2,677.4 2021.5,668.4 2033.1,662.0 2045.9,657.6 2058.2,650.5 2070.2,645.3 2095.1,636.4 2120.2,633.8 2144.5,633.8 2157.3,632.0 2168.9,628.2 2193.2,625.4 2230.4,621.8 2242.7,618.4 2279.0,614.6 2314.9,610.8 2340.0,608.2"/>
<polyline stroke="#ffffff" points="1591.1,1244.9 1627.7,1240.6 1668.7,1230.9 1688.2,1226.5 1699.0,1221.1 1718.4,1207.1 1729.2,1200.6 1738.9,1189.8 1750.7,1178.0 1763.7,1166.1 1775.6,1156.4 1787.4,1146.7 1798.2,1131.6 1804.7,1127.3 1815.5,1120.8 1824.1,1097.1 1837.1,1077.6 1851.1,1066.8 1863.0,1053.9 1880.0,1043.1 1887.0,1033.5 1898.6,1023.3 1910.6,1005.3 1922.9,987.4 1935.2,975.9 1947.2,968.2 1960.1,951.5 1972.1,938.7 1984.4,929.8 1997.2,924.6 2009.2,910.6 2033.1,900.3 2045.9,892.6 2058.2,887.5 2070.2,881.1 2107.4,850.9 2131.7,844.4 2144.5,840.1 2181.7,830.6 2217.6,826.0 2242.7,814.4 2254.7,811.9 2266.2,805.5 2279.0,803.4 2314.9,799.1 2327.7,796.5 2340.0,795.2"/>
<polyline stroke="#fdcb47" points="1560.8,1245.5 1586.7,1234.1 1608.3,1230.9 1627.7,1224.4 1640.7,1215.7 1647.2,1202.8 1658.0,1181.2 1668.7,1159.6 1679.1,1142.4 1688.2,1120.8 1699.0,1094.9 1708.7,1069.0 1718.4,1032.3 1729.2,989.2 1742.1,950.3 1764.1,884.9 1776.9,851.6 1784.6,831.1 1788.4,823.4 1800.7,790.1 1808.9,747.8 1812.7,735.0 1824.8,678.7 1837.1,630.0 1849.9,604.4 1861.4,553.1 1876.8,486.5 1879.3,466.0 1888.3,437.0 1897.3,378.1 1903.7,349.9 1910.1,321.7 1922.9,289.7 1935.2,274.3 1947.2,242.3 1958.8,201.3 1971.6,168.0 1984.4,141.1 1997.2,129.6 2010.0,118.0 2021.5,111.6 2047.2,86.0 2058.2,76.6 2083.1,44.5 2094.3,31.6 2106.8,27.7 2155.5,0.7 2204.5,-13.4 2253.4,-23.7 2302.3,-30.9"/>
<polyline stroke="#b93b74" points="1608.3,1242.7 1627.7,1237.3 1647.2,1228.7 1668.7,1220.1 1679.1,1215.7 1699.0,1209.3 1708.7,1202.8 1718.4,1198.5 1729.2,1185.5 1738.9,1174.7 1750.7,1164.0 1763.7,1153.2 1775.6,1146.7 1787.4,1135.9 1798.2,1125.1 1804.7,1116.5 1815.5,1110.0 1824.1,1094.9 1837.1,1097.1 1851.1,1086.3 1863.0,1083.0 1880.0,1073.3 1887.0,1068.1 1898.6,1063.0 1910.6,1057.9 1935.2,1045.8 1960.1,1045.1 1972.1,1039.9 1984.4,1034.8 1997.2,1002.8 2003.6,979.7 2009.2,956.7 2021.5,956.7 2033.1,952.8 2039.5,933.6 2045.9,912.6 2058.2,912.6 2070.2,909.3 2083.0,901.6 2095.1,893.9 2107.4,893.9 2120.2,883.6 2144.5,874.2 2168.9,873.4 2181.7,864.9 2193.2,864.4 2204.7,861.4 2217.6,861.4 2230.4,858.0 2303.4,858.0 2314.9,848.5 2327.7,848.5"/>
<polyline stroke="#efc567" points="1608.3,1243.8 1627.7,1235.2 1647.2,1224.4 1665.5,1210.4"/>
<polyline stroke="#efc567" points="1702.8,1180.2 1714.2,1164.6 1721.2,1144.8 1728.3,1130.6 1736.8,1108.0 1746.7,1086.7 1759.5,1068.3 1773.6,1054.2 1780.7,1040.0 1788.4,1020.7 1801.2,990.0 1812.7,964.4 1824.8,938.7 1837.1,924.6 1849.9,910.6 1861.4,900.3 1874.2,892.6 1887.0,864.4 1898.6,843.9 1910.6,824.7 1922.9,820.9 1947.2,805.5 1960.1,802.2 1972.1,794.0 1984.4,782.4 2009.2,764.5 2021.5,761.9 2045.9,758.1 2070.2,750.4 2120.2,737.6 2144.5,732.5 2168.9,727.8 2193.2,726.1 2204.7,723.0 2230.4,720.4 2266.2,716.6 2327.7,716.1"/>
<polyline stroke="#7a2a5c" points="1591.1,1243.8 1627.7,1230.9 1658.0,1219.0 1679.1,1211.4 1699.0,1198.5 1718.4,1184.5 1729.2,1172.6 1738.9,1166.1 1750.7,1146.7 1763.7,1133.7 1775.6,1123.0 1787.4,1105.7 1798.2,1092.7 1804.7,1079.8 1815.5,1058.2 1824.1,1045.3 1837.1,1030.2 1851.1,1021.5 1863.0,1017.2 1871.6,1002.1 1880.0,995.6 1887.0,992.5 1898.6,987.4 1910.6,984.9 1922.9,975.9 1947.2,957.9 1960.1,945.1 1972.1,938.7 1984.4,931.0 1997.2,927.2 2009.2,925.4 2033.1,924.6 2045.9,920.8 2070.2,914.4 2083.0,911.8 2107.4,909.3 2120.2,905.4 2144.5,904.1 2193.2,903.4 2242.7,900.3 2291.9,900.3 2303.4,894.7 2327.7,894.7"/>
<polyline stroke="#3a8fd6" points="1520.7,1246.2 1580.0,1245.2 1654.2,1242.3 1677.9,1236.5 1701.7,1230.7 1728.4,1222.0 1740.2,1217.1 1764.0,1205.5 1776.6,1199.7 1787.7,1188.1 1801.1,1178.4 1811.5,1170.6 1823.3,1160.9 1839.6,1147.4 1851.5,1141.6 1866.4,1135.7 1874.2,1128.3 1887.0,1120.6 1898.6,1111.7 1910.6,1104.0 1935.2,1095.0 1960.1,1082.2 1972.1,1077.1 1984.4,1074.5 1997.2,1069.4 2009.2,1068.1 2045.9,1063.0 2070.2,1059.7 2095.1,1051.0 2120.2,1047.6 2144.5,1043.8 2168.9,1038.7 2193.2,1035.6 2230.4,1030.5 2254.7,1025.3 2291.9,1023.8 2340.0,1022.8"/>
<polyline stroke="#28a55b" points="1547.9,1243.8 1591.1,1235.2 1617.0,1224.4 1634.2,1216.8 1647.2,1208.2 1658.0,1201.7 1668.7,1196.3 1679.1,1193.1 1688.2,1180.1 1699.0,1166.1 1708.7,1148.8 1718.4,1129.4 1729.2,1116.5 1750.7,1101.4 1763.7,1089.5 1775.6,1070.1 1787.4,1058.2 1804.7,1043.1 1824.1,1021.5 1837.1,1003.2 1851.1,996.7 1863.0,974.1 1880.0,950.3 1887.0,942.6 1898.6,936.2 1910.6,925.9 1922.9,919.5 1935.2,913.1 1960.1,878.5 1972.1,874.7 1984.4,851.6 1997.2,838.8 2021.5,825.2 2033.1,822.1 2058.2,806.8 2083.0,791.4 2107.4,788.3 2120.2,782.4 2157.3,768.3 2193.2,764.5 2217.6,758.1 2242.7,750.4 2254.7,749.1 2279.0,748.6 2291.9,747.1 2314.9,742.7"/>
<polyline stroke="#e24a45" points="1647.2,1244.9 1668.7,1235.2 1688.2,1224.4 1700.0,1202.8 1714.2,1181.6 1728.3,1170.3 1741.1,1156.1 1753.8,1144.8 1768.0,1137.7 1779.3,1130.6 1787.8,1123.5 1799.1,1116.5 1807.6,1115.0 1817.5,1102.3 1824.6,1085.3 1831.7,1081.1 1841.6,1078.2 1855.8,1058.4 1869.9,1041.4 1874.2,1038.7 1887.0,1034.8 1898.6,1020.7 1910.6,1011.8 1922.9,1009.2 1935.2,1005.3 1947.2,991.3 1960.1,987.4 1972.1,968.2 1984.4,959.2 1997.2,947.7 2009.2,940.0 2021.5,938.0 2033.1,937.5 2045.9,934.9 2070.2,931.0 2095.1,925.4 2181.7,925.4 2193.2,920.3 2204.7,919.5 2217.6,916.2 2230.4,915.7 2242.7,910.6 2314.9,910.6 2327.7,904.1"/>
<polyline stroke="#d580ff" points="1776.9,1160.4 1788.4,1160.4 1801.2,1151.4 1812.7,1143.7 1824.8,1120.6"/>
<polyline stroke="#d580ff" points="1862.7,1089.4 1874.2,1089.4 1887.0,1083.5 1898.6,1073.2 1910.6,1056.6"/>
<polyline stroke="#d580ff" points="1948.5,1043.0 1960.1,1043.0 1983.1,1036.1"/>
<polyline stroke="#d580ff" points="2045.9,1029.2 2058.2,1029.2 2081.8,1022.0"/>
<polyline stroke="#d580ff" points="2120.2,1018.7 2144.5,1018.7 2157.3,1014.3 2167.6,1005.3"/>
<polyline stroke="#d580ff" points="2204.7,987.4 2217.6,981.0 2253.4,981.0"/>
<polyline stroke="#d580ff" points="2291.9,977.9 2340.0,977.9"/>
<polyline stroke="#2bb15f" points="1639.3,1244.7 1703.1,1233.7 1713.5,1230.6 1728.4,1225.9 1740.2,1222.8"/>
<polyline stroke="#2bb15f" points="1776.6,1199.3 1787.7,1196.2 1801.1,1189.9 1811.5,1180.5 1823.3,1168.0 1839.6,1158.6 1851.5,1152.4 1866.4,1149.2 1874.2,1147.5 1887.0,1141.1 1898.6,1133.5 1910.6,1123.2 1922.9,1116.8 1935.2,1113.0 1960.1,1102.7 1984.4,1089.9 1997.2,1083.5 2021.5,1079.7 2045.9,1075.8 2070.2,1072.0 2095.1,1068.1 2120.2,1064.3 2144.5,1061.7 2168.9,1056.6 2193.2,1052.0 2204.7,1048.4 2253.4,1046.3"/>
<polyline stroke="#2bb15f" points="2291.9,1045.8 2340.0,1044.3"/>
<polyline stroke="#fdd03b" points="1629.9,1244.9 1703.3,1244.9 1714.1,1236.2 1729.2,1224.4 1738.9,1222.2 1751.0,1201.4 1776.5,1195.8 1799.1,1191.5 1824.6,1188.0 1834.5,1183.7 1855.8,1180.2 1877.0,1176.6 1886.9,1177.3 1898.2,1172.4 1922.3,1172.4 1935.0,1169.6 1960.5,1168.1 1976.1,1167.4 1997.3,1161.8 2020.0,1156.8 2045.9,1157.8 2058.2,1155.2 2083.0,1152.7 2120.2,1148.8 2144.5,1147.5 2157.3,1143.7 2168.9,1137.3 2193.2,1134.0 2242.7,1128.3 2340.0,1127.3"/>
<polyline stroke="#e24a4a" points="1647.2,1244.9 1679.1,1237.3 1718.4,1224.4"/>
<polyline stroke="#e24a4a" points="1776.5,1201.4 1787.8,1198.6 1799.1,1188.7 1813.3,1181.6 1827.4,1173.1 1841.6,1163.2 1850.1,1157.5"/>
<polyline stroke="#e24a4a" points="1874.2,1154.0 1891.2,1141.9 1912.4,1132.0 1933.6,1125.0 1960.5,1122.8 1976.1,1117.2 1997.3,1108.0 2021.5,1098.9 2033.1,1095.0 2058.2,1092.5 2070.2,1082.2 2107.4,1079.7 2131.7,1078.4 2157.3,1069.4 2193.2,1066.8 2254.7,1063.0 2279.0,1059.2 2327.7,1056.1"/>
<polyline stroke="#fb1521" points="1653.6,1239.5 1677.4,1237.3"/>
<polyline stroke="#fb1521" points="1834.5,1148.8 1849.9,1143.7 1874.2,1133.5 1877.0,1130.6 1898.2,1120.7 1912.4,1113.6 1933.6,1109.4 1952.0,1102.3 1969.0,1092.4 1980.4,1077.5 1995.9,1073.3 2008.7,1045.7 2033.1,1043.8 2045.9,1038.7 2058.2,1036.1 2083.0,1032.3 2095.1,1031.0 2120.2,1026.4 2131.7,1023.3 2144.5,1019.4 2168.9,1016.9 2181.7,1014.3 2193.2,1010.0 2217.6,1009.2 2230.4,1007.9 2242.7,1002.3 2340.0,1000.2"/>
<polyline stroke="#27c4bd" points="1690.3,1237.3 1709.7,1233.0 1738.9,1222.2 1750.7,1220.1 1763.7,1211.3 1785.0,1205.7 1799.1,1201.4 1813.3,1194.3 1834.5,1184.4 1855.8,1180.2 1877.0,1173.1 1898.2,1163.2 1912.4,1153.3 1933.6,1146.2 1960.5,1143.4 1972.1,1137.3 1984.4,1129.6 1997.2,1124.5 2021.5,1116.8 2045.9,1110.4 2070.2,1104.0 2095.1,1092.5 2131.7,1089.9 2144.5,1087.3 2157.3,1082.2 2168.9,1079.7 2217.6,1077.1 2303.4,1073.2 2340.0,1072.5"/>
<polyline stroke="#1d78b4" points="1445.4,1246.0 1507.3,1244.9 1537.1,1241.6 1556.5,1236.2 1569.5,1234.7 1591.1,1227.6 1617.0,1219.0 1627.7,1208.2 1638.5,1193.1 1648.2,1181.2 1658.0,1166.1 1666.6,1149.9 1679.1,1138.1 1688.2,1118.6 1699.0,1094.9 1708.7,1073.3 1718.4,1049.6 1728.1,1010.7 1733.5,978.4 1738.2,950.3 1751.2,914.4 1765.3,901.6 1770.5,864.4 1774.8,831.1 1788.4,806.8 1801.2,754.2 1812.7,732.5 1818.6,683.8 1824.8,632.5 1837.8,617.7 1849.4,578.7 1864.0,530.1 1879.3,471.1 1888.3,442.1 1898.6,419.1 1910.6,380.6 1922.9,356.3 1935.7,333.2 1947.2,319.7 1960.1,298.7 1972.9,276.9 1984.9,257.2 1997.2,235.9 2009.2,220.5 2021.5,202.6 2033.1,191.0 2045.9,186.4 2058.2,182.1 2070.2,173.1 2083.0,162.9 2095.1,157.2 2107.4,143.6 2120.2,133.4 2131.7,131.6 2144.5,123.2 2168.9,110.3 2193.2,96.2 2217.6,91.1 2231.6,86.0 2254.7,78.3 2279.0,71.9 2303.4,66.8 2327.7,62.4 2340.0,61.4"/>
<polyline stroke="#fdd03b" points="1776.5,1167.4 1789.2,1159.6"/>
<polyline stroke="#fdd03b" points="1813.3,1110.8 1824.6,1105.1 1833.1,1079.6 1841.6,1074.0 1855.8,1065.5 1869.9,1054.2 1886.9,1040.0 1898.6,1034.8 1910.6,1028.4 1922.9,1013.0 1947.2,1010.0 1960.1,1006.6 1972.1,993.1 1984.4,992.5 1997.2,984.9 2009.2,979.7 2021.5,974.6 2033.1,972.0 2181.7,972.0 2193.2,964.4 2204.7,954.1 2217.6,946.4 2230.4,945.9 2254.7,938.7 2266.2,933.1 2291.9,925.4 2314.9,925.4 2327.7,922.1 2340.0,922.1"/>
<polyline stroke="#158c16" points="1606.6,1234.7 1619.1,1218.3 1634.2,1203.2 1647.2,1189.8 1658.0,1178.0 1668.7,1166.1 1679.1,1153.2 1683.8,1133.7 1694.6,1105.7 1704.4,1073.3 1714.1,1041.0 1724.9,1010.7 1733.5,982.7 1741.0,962.2 1750.7,948.2 1764.1,928.5 1776.9,877.2 1791.0,833.7 1799.9,801.6 1812.7,765.8 1824.8,733.7 1837.1,713.2 1849.4,699.2 1861.4,668.4 1874.2,642.8 1887.0,619.7 1898.6,596.7 1910.6,572.3 1922.9,560.8 1935.2,555.2 1947.2,535.2 1960.1,522.4 1972.1,507.0 1984.4,492.4 1997.2,483.9 2021.5,472.4 2029.2,466.0 2045.9,454.9 2058.7,447.3 2095.8,433.9 2107.4,431.9 2133.0,420.4 2145.8,416.5 2168.9,409.3 2191.9,405.8 2204.7,401.1 2230.4,394.7 2266.2,389.1 2279.0,388.8 2304.7,385.8 2314.9,383.7 2327.7,384.0"/>
<polyline stroke="#e8474c" points="1591.1,1244.9 1627.7,1235.2 1647.2,1226.5 1658.0,1219.0 1668.7,1212.5 1679.1,1203.9 1688.2,1189.8 1699.0,1171.5 1708.7,1151.0 1718.4,1129.4 1729.2,1112.2 1738.9,1084.1 1750.7,1058.2 1763.7,1045.3 1775.6,1015.1 1787.4,980.5 1802.5,950.3 1812.7,915.7 1824.8,884.9 1837.1,864.4 1853.7,843.9 1861.4,817.0 1874.2,788.8 1885.8,765.8 1898.6,745.3 1910.6,729.9 1922.9,717.1 1935.2,712.0 1947.2,686.3 1960.1,671.0 1972.1,657.6 1984.4,647.9 1997.2,637.7 2009.2,627.9 2021.5,623.6 2033.1,619.2 2045.9,609.5 2058.2,603.1 2070.2,596.7 2083.0,588.5 2095.1,585.9 2107.4,582.6 2120.2,576.2 2144.5,571.0 2157.3,565.4 2181.7,560.3 2193.2,559.5 2230.4,545.4 2254.7,540.8 2279.0,539.0 2291.9,536.5 2314.9,536.5"/>
<polyline stroke="#3a8fd8" points="1627.7,1244.9 1668.7,1237.3 1699.0,1226.5 1740.0,1200.0 1776.0,1195.0 1790.0,1170.0 1800.0,1160.0 1830.0,1140.0 1860.0,1120.0 1900.0,1105.0 1950.0,1085.0 1984.4,1075.8 1997.2,1074.5 2045.9,1074.0 2070.2,1071.5 2107.4,1069.4 2144.5,1068.1 2181.7,1063.0 2193.2,1061.7 2204.7,1058.6 2230.4,1057.9 2242.7,1054.0 2340.0,1051.7"/>
<polyline stroke="#27b5e5" points="1471.9,1246.3 1524.3,1245.9 1571.9,1245.1 1610.0,1243.4 1617.1,1241.1 1629.0,1237.9 1642.3,1234.3 1654.2,1232.7 1666.1,1228.0 1677.9,1225.4 1689.8,1219.6 1701.7,1211.3 1713.5,1198.7 1728.4,1188.8 1740.2,1186.2 1764.0,1186.2 1780.3,1173.7 1791.6,1164.3 1806.7,1149.7 1825.6,1134.4 1836.9,1129.8 1850.1,1126.4 1865.2,1113.8 1877.0,1108.0 1884.1,1096.6 1898.2,1081.1 1912.4,1073.3 1935.0,1068.3 1947.8,1060.5 1961.9,1051.3 1984.4,1036.1 2009.2,1028.9 2033.1,1025.8 2045.9,1022.0 2070.2,1015.6 2107.4,1007.9 2120.2,1006.6 2144.5,1001.5 2181.7,993.8 2193.2,993.1 2217.6,990.0 2254.7,986.1 2303.4,983.6 2327.7,981.0 2340.0,946.4"/>
</g>
<text x="1443.0" y="227.8" font-size="26.4" fill="#45a4cf" stroke="#45a4cf" stroke-width="0.55" text-anchor="end" textLength="33.6" lengthAdjust="spacingAndGlyphs">80</text>
<text x="1443.0" y="484.9" font-size="26.4" fill="#45a4cf" stroke="#45a4cf" stroke-width="0.55" text-anchor="end" textLength="33.6" lengthAdjust="spacingAndGlyphs">60</text>
<text x="1443.0" y="741.9" font-size="26.4" fill="#45a4cf" stroke="#45a4cf" stroke-width="0.55" text-anchor="end" textLength="33.6" lengthAdjust="spacingAndGlyphs">40</text>
<text x="1443.0" y="999.0" font-size="26.4" fill="#45a4cf" stroke="#45a4cf" stroke-width="0.55" text-anchor="end" textLength="33.6" lengthAdjust="spacingAndGlyphs">20</text>
<text x="1443.0" y="1256.1" font-size="26.4" fill="#45a4cf" stroke="#45a4cf" stroke-width="0.55" text-anchor="end">0</text>
<text x="1507.1" y="1346.6" font-size="26.4" fill="#45a4cf" stroke="#45a4cf" stroke-width="0.55" text-anchor="middle" textLength="75.5" lengthAdjust="spacingAndGlyphs">Mar 1</text>
<text x="1678.6" y="1346.6" font-size="26.4" fill="#45a4cf" stroke="#45a4cf" stroke-width="0.55" text-anchor="middle" textLength="92.3" lengthAdjust="spacingAndGlyphs">Mar 15</text>
<text x="1850.1" y="1346.6" font-size="26.4" fill="#45a4cf" stroke="#45a4cf" stroke-width="0.55" text-anchor="middle" textLength="92.3" lengthAdjust="spacingAndGlyphs">Mar 29</text>
<text x="2021.6" y="1346.6" font-size="26.4" fill="#45a4cf" stroke="#45a4cf" stroke-width="0.55" text-anchor="middle" textLength="88.7" lengthAdjust="spacingAndGlyphs">Apr 12</text>
<text x="2193.1" y="1346.6" font-size="26.4" fill="#45a4cf" stroke="#45a4cf" stroke-width="0.55" text-anchor="middle" textLength="88.7" lengthAdjust="spacingAndGlyphs">Apr 26</text>
<text x="1507.0" y="1380.2" font-size="26.4" fill="#45a4cf" stroke="#45a4cf" stroke-width="0.55" text-anchor="middle" textLength="67.2" lengthAdjust="spacingAndGlyphs">2020</text>
<text x="1893.3" y="1431.3" font-size="30.8" fill="#b5e6fb" stroke="#b5e6fb" stroke-width="0.55" text-anchor="middle" textLength="72.7" lengthAdjust="spacingAndGlyphs">Date</text>
<text x="0.0" y="0.0" font-size="30.8" fill="#b5e6fb" stroke="#b5e6fb" stroke-width="0.55" text-anchor="middle" textLength="568.2" lengthAdjust="spacingAndGlyphs" transform="translate(1361.2,602.4) rotate(-90)">Cas Confirmés / Population * 10'000</text>
<line x1="2368.4" y1="87.1" x2="2434.6" y2="87.1" stroke="#ea4549" stroke-width="4.4"/>
<text x="2445.6" y="97.4" font-size="26.4" fill="#44d7d6" stroke="#44d7d6" stroke-width="0.55" text-anchor="start" textLength="32.8" lengthAdjust="spacingAndGlyphs">BL</text>
<line x1="2368.4" y1="128.9" x2="2434.6" y2="128.9" stroke="#f8e5a9" stroke-width="4.4"/>
<text x="2445.6" y="139.2" font-size="26.4" fill="#44d7d6" stroke="#44d7d6" stroke-width="0.55" text-anchor="start" textLength="36.2" lengthAdjust="spacingAndGlyphs">BS</text>
<line x1="2368.4" y1="170.7" x2="2434.6" y2="170.7" stroke="#ffffff" stroke-width="4.4"/>
<text x="2445.6" y="181.0" font-size="26.4" fill="#44d7d6" stroke="#44d7d6" stroke-width="0.55" text-anchor="start" textLength="33.5" lengthAdjust="spacingAndGlyphs">FR</text>
<line x1="2368.4" y1="212.5" x2="2434.6" y2="212.5" stroke="#fdcb47" stroke-width="4.4"/>
<text x="2445.6" y="222.8" font-size="26.4" fill="#44d7d6" stroke="#44d7d6" stroke-width="0.55" text-anchor="start" textLength="37.1" lengthAdjust="spacingAndGlyphs">GE</text>
<line x1="2368.4" y1="254.3" x2="2434.6" y2="254.3" stroke="#b93b74" stroke-width="4.4"/>
<text x="2445.6" y="264.6" font-size="26.4" fill="#44d7d6" stroke="#44d7d6" stroke-width="0.55" text-anchor="start" textLength="35.2" lengthAdjust="spacingAndGlyphs">GL</text>
<line x1="2368.4" y1="296.1" x2="2434.6" y2="296.1" stroke="#efc567" stroke-width="4.4"/>
<text x="2445.6" y="306.4" font-size="26.4" fill="#44d7d6" stroke="#44d7d6" stroke-width="0.55" text-anchor="start" textLength="38.8" lengthAdjust="spacingAndGlyphs">GR</text>
<line x1="2368.4" y1="337.9" x2="2434.6" y2="337.9" stroke="#7a2a5c" stroke-width="4.4"/>
<text x="2445.6" y="348.2" font-size="26.4" fill="#44d7d6" stroke="#44d7d6" stroke-width="0.55" text-anchor="start" textLength="31.3" lengthAdjust="spacingAndGlyphs">JU</text>
<line x1="2368.4" y1="379.7" x2="2434.6" y2="379.7" stroke="#3a8fd6" stroke-width="4.4"/>
<text x="2445.6" y="390.0" font-size="26.4" fill="#44d7d6" stroke="#44d7d6" stroke-width="0.55" text-anchor="start" textLength="34.0" lengthAdjust="spacingAndGlyphs">LU</text>
<line x1="2368.4" y1="421.5" x2="2434.6" y2="421.5" stroke="#28a55b" stroke-width="4.4"/>
<text x="2445.6" y="431.8" font-size="26.4" fill="#44d7d6" stroke="#44d7d6" stroke-width="0.55" text-anchor="start" textLength="36.4" lengthAdjust="spacingAndGlyphs">NE</text>
<line x1="2368.4" y1="463.3" x2="2434.6" y2="463.3" stroke="#e24a45" stroke-width="4.4"/>
<text x="2445.6" y="473.6" font-size="26.4" fill="#44d7d6" stroke="#44d7d6" stroke-width="0.55" text-anchor="start" textLength="45.9" lengthAdjust="spacingAndGlyphs">NW</text>
<line x1="2368.4" y1="505.1" x2="2434.6" y2="505.1" stroke="#d580ff" stroke-width="4.4"/>
<text x="2445.6" y="515.4" font-size="26.4" fill="#44d7d6" stroke="#44d7d6" stroke-width="0.55" text-anchor="start" textLength="46.9" lengthAdjust="spacingAndGlyphs">OW</text>
<line x1="2368.4" y1="546.9" x2="2434.6" y2="546.9" stroke="#2bb15f" stroke-width="4.4"/>
<text x="2445.6" y="557.2" font-size="26.4" fill="#44d7d6" stroke="#44d7d6" stroke-width="0.55" text-anchor="start" textLength="38.5" lengthAdjust="spacingAndGlyphs">SG</text>
<line x1="2368.4" y1="588.7" x2="2434.6" y2="588.7" stroke="#fdd03b" stroke-width="4.4"/>
<text x="2445.6" y="599.0" font-size="26.4" fill="#44d7d6" stroke="#44d7d6" stroke-width="0.55" text-anchor="start" textLength="37.9" lengthAdjust="spacingAndGlyphs">SH</text>
<line x1="2368.4" y1="630.5" x2="2434.6" y2="630.5" stroke="#e24a4a" stroke-width="4.4"/>
<text x="2445.6" y="640.8" font-size="26.4" fill="#44d7d6" stroke="#44d7d6" stroke-width="0.55" text-anchor="start" textLength="38.8" lengthAdjust="spacingAndGlyphs">SO</text>
<line x1="2368.4" y1="672.3" x2="2434.6" y2="672.3" stroke="#fb1521" stroke-width="4.4"/>
<text x="2445.6" y="682.6" font-size="26.4" fill="#44d7d6" stroke="#44d7d6" stroke-width="0.55" text-anchor="start" textLength="36.1" lengthAdjust="spacingAndGlyphs">SZ</text>
<line x1="2368.4" y1="714.1" x2="2434.6" y2="714.1" stroke="#27c4bd" stroke-width="4.4"/>
<text x="2445.6" y="724.4" font-size="26.4" fill="#44d7d6" stroke="#44d7d6" stroke-width="0.55" text-anchor="start" textLength="36.7" lengthAdjust="spacingAndGlyphs">TG</text>
<line x1="2368.4" y1="755.9" x2="2434.6" y2="755.9" stroke="#1d78b4" stroke-width="4.4"/>
<text x="2445.6" y="766.2" font-size="26.4" fill="#44d7d6" stroke="#44d7d6" stroke-width="0.55" text-anchor="start" textLength="27.4" lengthAdjust="spacingAndGlyphs">TI</text>
<line x1="2368.4" y1="797.7" x2="2434.6" y2="797.7" stroke="#fdd03b" stroke-width="4.4"/>
<text x="2445.6" y="808.0" font-size="26.4" fill="#44d7d6" stroke="#44d7d6" stroke-width="0.55" text-anchor="start" textLength="37.7" lengthAdjust="spacingAndGlyphs">UR</text>
<line x1="2368.4" y1="839.5" x2="2434.6" y2="839.5" stroke="#158c16" stroke-width="4.4"/>
<text x="2445.6" y="849.8" font-size="26.4" fill="#44d7d6" stroke="#44d7d6" stroke-width="0.55" text-anchor="start" textLength="38.4" lengthAdjust="spacingAndGlyphs">VD</text>
<line x1="2368.4" y1="881.3" x2="2434.6" y2="881.3" stroke="#e8474c" stroke-width="4.4"/>
<text x="2445.6" y="891.6" font-size="26.4" fill="#44d7d6" stroke="#44d7d6" stroke-width="0.55" text-anchor="start" textLength="36.1" lengthAdjust="spacingAndGlyphs">VS</text>
<line x1="2368.4" y1="923.1" x2="2434.6" y2="923.1" stroke="#3a8fd8" stroke-width="4.4"/>
<text x="2445.6" y="933.4" font-size="26.4" fill="#44d7d6" stroke="#44d7d6" stroke-width="0.55" text-anchor="start" textLength="38.5" lengthAdjust="spacingAndGlyphs">ZG</text>
<line x1="2368.4" y1="964.9" x2="2434.6" y2="964.9" stroke="#27b5e5" stroke-width="4.4"/>
<text x="2445.6" y="975.2" font-size="26.4" fill="#44d7d6" stroke="#44d7d6" stroke-width="0.55" text-anchor="start" textLength="37.9" lengthAdjust="spacingAndGlyphs">ZH</text>
<line x1="1047.7" y1="85.8" x2="1047.7" y2="1319.5" stroke="#212123" stroke-width="7.4"/>
<line x1="1047.7" y1="72.6" x2="1047.7" y2="1318" stroke="#ffffff" stroke-width="3.3" stroke-dasharray="6.6 6.63"/>
<rect x="587.2" y="314.2" width="445.8" height="1145.8" fill="#212123" stroke="#454547" stroke-width="1.6"/>
<text x="593.2" y="348.7" font-size="26.4" fill="#44d7d6" stroke="#44d7d6" stroke-width="0.55" text-anchor="start" textLength="165.9" lengthAdjust="spacingAndGlyphs">May 7, 2020</text>
<line x1="599" y1="380.8" x2="665.3" y2="380.8" stroke="#8ad0ee" stroke-width="4.4"/>
<text x="675.8" y="391.6" font-size="26.4" fill="#44d7d6" stroke="#44d7d6" stroke-width="0.55" text-anchor="start" textLength="136.3" lengthAdjust="spacingAndGlyphs">AG : 1145</text>
<line x1="599" y1="422.6" x2="665.3" y2="422.6" stroke="#5a6377" stroke-width="4.4"/>
<text x="675.8" y="433.4" font-size="26.4" fill="#44d7d6" stroke="#44d7d6" stroke-width="0.55" text-anchor="start" textLength="302.1" lengthAdjust="spacingAndGlyphs">AI : (May 6, 2020, 25)</text>
<line x1="599" y1="464.4" x2="665.3" y2="464.4" stroke="#5a6377" stroke-width="4.4"/>
<text x="675.8" y="475.2" font-size="26.4" fill="#44d7d6" stroke="#44d7d6" stroke-width="0.55" text-anchor="start" textLength="100.6" lengthAdjust="spacingAndGlyphs">AR : 97</text>
<line x1="599" y1="506.2" x2="665.3" y2="506.2" stroke="#e8602c" stroke-width="4.4"/>
<text x="675.8" y="517.0" font-size="26.4" fill="#44d7d6" stroke="#44d7d6" stroke-width="0.55" text-anchor="start" textLength="132.5" lengthAdjust="spacingAndGlyphs">BE : 1809</text>
<line x1="599" y1="548.0" x2="665.3" y2="548.0" stroke="#ea4549" stroke-width="4.4"/>
<text x="675.8" y="558.8" font-size="26.4" fill="#44d7d6" stroke="#44d7d6" stroke-width="0.55" text-anchor="start" textLength="113.8" lengthAdjust="spacingAndGlyphs">BL : 833</text>
<line x1="599" y1="589.8" x2="665.3" y2="589.8" stroke="#f8e5a9" stroke-width="4.4"/>
<text x="675.8" y="600.6" font-size="26.4" fill="#44d7d6" stroke="#44d7d6" stroke-width="0.55" text-anchor="start" textLength="117.1" lengthAdjust="spacingAndGlyphs">BS : 965</text>
<line x1="599" y1="631.6" x2="665.3" y2="631.6" stroke="#ffffff" stroke-width="4.4"/>
<text x="675.8" y="642.4" font-size="26.4" fill="#44d7d6" stroke="#44d7d6" stroke-width="0.55" text-anchor="start" textLength="131.3" lengthAdjust="spacingAndGlyphs">FR : 1115</text>
<line x1="599" y1="673.4" x2="665.3" y2="673.4" stroke="#fdcb47" stroke-width="4.4"/>
<text x="675.8" y="684.2" font-size="26.4" fill="#44d7d6" stroke="#44d7d6" stroke-width="0.55" text-anchor="start" textLength="343.6" lengthAdjust="spacingAndGlyphs">GE : (May 5, 2020, 4958)</text>
<line x1="599" y1="715.2" x2="665.3" y2="715.2" stroke="#b93b74" stroke-width="4.4"/>
<text x="675.8" y="726.0" font-size="26.4" fill="#44d7d6" stroke="#44d7d6" stroke-width="0.55" text-anchor="start" textLength="116.1" lengthAdjust="spacingAndGlyphs">GL : 125</text>
<line x1="599" y1="757.0" x2="665.3" y2="757.0" stroke="#efc567" stroke-width="4.4"/>
<text x="675.8" y="767.8" font-size="26.4" fill="#44d7d6" stroke="#44d7d6" stroke-width="0.55" text-anchor="start" textLength="119.8" lengthAdjust="spacingAndGlyphs">GR : 818</text>
<line x1="599" y1="798.8" x2="665.3" y2="798.8" stroke="#7a2a5c" stroke-width="4.4"/>
<text x="675.8" y="809.6" font-size="26.4" fill="#44d7d6" stroke="#44d7d6" stroke-width="0.55" text-anchor="start" textLength="112.3" lengthAdjust="spacingAndGlyphs">JU : 201</text>
<line x1="599" y1="840.6" x2="665.3" y2="840.6" stroke="#3a8fd6" stroke-width="4.4"/>
<text x="675.8" y="851.4" font-size="26.4" fill="#44d7d6" stroke="#44d7d6" stroke-width="0.55" text-anchor="start" textLength="115.0" lengthAdjust="spacingAndGlyphs">LU : 710</text>
<line x1="599" y1="882.4" x2="665.3" y2="882.4" stroke="#28a55b" stroke-width="4.4"/>
<text x="675.8" y="893.2" font-size="26.4" fill="#44d7d6" stroke="#44d7d6" stroke-width="0.55" text-anchor="start" textLength="326.1" lengthAdjust="spacingAndGlyphs">NE : (May 6, 2020, 697)</text>
<line x1="599" y1="924.2" x2="665.3" y2="924.2" stroke="#e24a45" stroke-width="4.4"/>
<text x="675.8" y="935.0" font-size="26.4" fill="#44d7d6" stroke="#44d7d6" stroke-width="0.55" text-anchor="start" textLength="126.8" lengthAdjust="spacingAndGlyphs">NW : 115</text>
<line x1="599" y1="966.0" x2="665.3" y2="966.0" stroke="#d580ff" stroke-width="4.4"/>
<text x="675.8" y="976.8" font-size="26.4" fill="#44d7d6" stroke="#44d7d6" stroke-width="0.55" text-anchor="start" textLength="111.0" lengthAdjust="spacingAndGlyphs">OW : 79</text>
<line x1="599" y1="1007.8" x2="665.3" y2="1007.8" stroke="#2bb15f" stroke-width="4.4"/>
<text x="675.8" y="1018.6" font-size="26.4" fill="#44d7d6" stroke="#44d7d6" stroke-width="0.55" text-anchor="start" textLength="119.5" lengthAdjust="spacingAndGlyphs">SG : 795</text>
<line x1="599" y1="1049.6" x2="665.3" y2="1049.6" stroke="#fdd03b" stroke-width="4.4"/>
<text x="675.8" y="1060.4" font-size="26.4" fill="#44d7d6" stroke="#44d7d6" stroke-width="0.55" text-anchor="start" textLength="102.0" lengthAdjust="spacingAndGlyphs">SH : 76</text>
<line x1="599" y1="1091.4" x2="665.3" y2="1091.4" stroke="#e24a4a" stroke-width="4.4"/>
<text x="675.8" y="1102.2" font-size="26.4" fill="#44d7d6" stroke="#44d7d6" stroke-width="0.55" text-anchor="start" textLength="119.8" lengthAdjust="spacingAndGlyphs">SO : 406</text>
<line x1="599" y1="1133.2" x2="665.3" y2="1133.2" stroke="#fb1521" stroke-width="4.4"/>
<text x="675.8" y="1144.0" font-size="26.4" fill="#44d7d6" stroke="#44d7d6" stroke-width="0.55" text-anchor="start" textLength="117.1" lengthAdjust="spacingAndGlyphs">SZ : 305</text>
<line x1="599" y1="1175.0" x2="665.3" y2="1175.0" stroke="#27c4bd" stroke-width="4.4"/>
<text x="675.8" y="1185.8" font-size="26.4" fill="#44d7d6" stroke="#44d7d6" stroke-width="0.55" text-anchor="start" textLength="117.7" lengthAdjust="spacingAndGlyphs">TG : 374</text>
<line x1="599" y1="1216.8" x2="665.3" y2="1216.8" stroke="#1d78b4" stroke-width="4.4"/>
<text x="675.8" y="1227.6" font-size="26.4" fill="#44d7d6" stroke="#44d7d6" stroke-width="0.55" text-anchor="start" textLength="125.1" lengthAdjust="spacingAndGlyphs">TI : 3253</text>
<line x1="599" y1="1258.6" x2="665.3" y2="1258.6" stroke="#fdd03b" stroke-width="4.4"/>
<text x="675.8" y="1269.4" font-size="26.4" fill="#44d7d6" stroke="#44d7d6" stroke-width="0.55" text-anchor="start" textLength="101.8" lengthAdjust="spacingAndGlyphs">UR : 92</text>
<line x1="599" y1="1300.4" x2="665.3" y2="1300.4" stroke="#158c16" stroke-width="4.4"/>
<text x="675.8" y="1311.2" font-size="26.4" fill="#44d7d6" stroke="#44d7d6" stroke-width="0.55" text-anchor="start" textLength="136.1" lengthAdjust="spacingAndGlyphs">VD : 5363</text>
<line x1="599" y1="1342.2" x2="665.3" y2="1342.2" stroke="#e8474c" stroke-width="4.4"/>
<text x="675.8" y="1353.0" font-size="26.4" fill="#44d7d6" stroke="#44d7d6" stroke-width="0.55" text-anchor="start" textLength="342.6" lengthAdjust="spacingAndGlyphs">VS : (May 6, 2020, 1899)</text>
<line x1="599" y1="1384.0" x2="665.3" y2="1384.0" stroke="#3a8fd8" stroke-width="4.4"/>
<text x="675.8" y="1394.8" font-size="26.4" fill="#44d7d6" stroke="#44d7d6" stroke-width="0.55" text-anchor="start" textLength="119.5" lengthAdjust="spacingAndGlyphs">ZG : 192</text>
<line x1="599" y1="1425.8" x2="665.3" y2="1425.8" stroke="#27b5e5" stroke-width="4.4"/>
<text x="675.8" y="1436.6" font-size="26.4" fill="#44d7d6" stroke="#44d7d6" stroke-width="0.55" text-anchor="start" textLength="135.6" lengthAdjust="spacingAndGlyphs">ZH : 3134</text>
<rect x="835" y="1380.5" width="26" height="50" rx="13" fill="#f8ecee"/>
<circle cx="845.2" cy="1428" r="13.7" fill="#f8ecee"/>
<circle cx="845.4" cy="1470" r="13.6" fill="#f8ecee"/>
<rect x="0" y="0" width="2536" height="12" fill="#dee1e6"/>
<path d="M2087,12.2 H2093 A12,12 0 0 0 2105,0 L2170.5,0 A12,12 0 0 0 2182.5,12.2 H2188 Z" fill="#ffffff"/>
<rect x="0" y="11.7" width="2536" height="72.8" fill="#ffffff"/>
<rect x="0" y="83.9" width="2536" height="2.2" fill="#bbbbbd"/>
<rect x="0" y="86" width="2536" height="1.1" fill="#0c0c0e" opacity="0.75"/>
<rect x="216" y="20" width="1462" height="56" rx="28" fill="#f1f3f4"/>
<path d="M55.5,47.5 H33.5 M43.5,36.5 L32.5,47.5 L43.5,58.5" fill="none" stroke="#5f6368" stroke-width="2.8" stroke-linecap="round" stroke-linejoin="round"/>
<path d="M96,47.5 H118 M108,36.5 L119,47.5 L108,58.5" fill="none" stroke="#babcbe" stroke-width="2.8" stroke-linecap="round" stroke-linejoin="round"/>
<path d="M180.4,40.6 A11.2,11.2 0 1 0 182.6,52.2" fill="none" stroke="#5f6368" stroke-width="2.8" stroke-linecap="round"/>
<path d="M185.9,35.2 V45.9 H175.6 Z" fill="#5f6368"/>
<rect x="243.9" y="45.3" width="16" height="13.7" rx="2" fill="#5f6368"/>
<path d="M247.8,46.5 V43.6 a4.15,4.15 0 0 1 8.3,0 V46.5" fill="none" stroke="#5f6368" stroke-width="2.6"/>
<text x="284.6" y="58.2" font-family='"Liberation Sans", sans-serif' font-size="27.6" fill="#202124" stroke="#202124" stroke-width="0.55" textLength="201" lengthAdjust="spacing">corona-data.ch</text>
<circle cx="1575.5" cy="45.3" r="9.4" fill="none" stroke="#5f6368" stroke-width="2.8"/>
<path d="M1582.6,52.6 L1590,59.6" stroke="#5f6368" stroke-width="3.4" stroke-linecap="butt"/>
<path d="M1570.8,45.3 H1580" stroke="#5f6368" stroke-width="1.8"/>
<polygon points="1642.0,34.0 1646.1,43.8 1656.6,44.6 1648.6,51.5 1651.1,61.9 1642.0,56.3 1632.9,61.9 1635.4,51.5 1627.4,44.6 1637.9,43.8" fill="#1a73e8" stroke="#1a73e8" stroke-width="0.5" stroke-linejoin="round"/>
<polygon points="1737.9,54.4 1728.6,63.7 1715.4,63.7 1706.1,54.4 1706.1,41.2 1715.4,31.9 1728.6,31.9 1737.9,41.2" fill="#e0141e"/>
<path d="M1715.4,52 V42.3 a1.35,1.35 0 0 1 2.7,0 V46 h0.5 V38.6 a1.35,1.35 0 0 1 2.7,0 V46 h0.5 V36.8 a1.35,1.35 0 0 1 2.7,0 V46 h0.5 V39 a1.35,1.35 0 0 1 2.7,0 V50.5 l2,-4.6 q0.9,-1.6 2.2,-1 q0.9,0.7 0.3,2.3 l-2.6,7.6 q-1.6,4.9 -6.6,4.9 q-7.6,0 -7.6,-7.7 Z" fill="#ffffff"/>
<polygon points="1802.0,54.4 1792.7,63.7 1779.5,63.7 1770.2,54.4 1770.2,41.2 1779.5,31.9 1792.7,31.9 1802.0,41.2" fill="#d2121c"/>
<text x="1772.7" y="53.7" font-family='"Liberation Sans", sans-serif' font-weight="bold" font-size="16.2" fill="#ffffff" stroke="#ffffff" stroke-width="0.5" textLength="26.6" lengthAdjust="spacingAndGlyphs">ABP</text>
<path d="M1846.6,55.6 V52.2 l-7.4,-4 q-2.3,-1.4 -1.3,-3.2 q1,-1.6 3.2,-0.9 l4.3,1.4 V35.6 q0,-2 2,-2 H1856 q2,0 2,2 V49 q0,2.6 -1.2,4.2 V55.6 Z" fill="#ffffff" stroke="#4b5b9b" stroke-width="1.35" stroke-linejoin="round"/>
<path d="M1848.6,34.6 v7.2 M1851.6,34.6 v7.2 M1854.6,34.6 v7.2" stroke="#4b5b9b" stroke-width="1.3"/>
<rect x="1845.8" y="55.5" width="12.3" height="6.4" rx="0.8" fill="#4c66b0" stroke="#3c4f95" stroke-width="0.9"/>
<rect x="1899.3" y="33" width="30" height="29.4" rx="6" fill="#8f8f8f"/>
<circle cx="1907.6" cy="55.2" r="6" fill="#ffffff"/><circle cx="1921.4" cy="55.2" r="6" fill="#ffffff"/>
<rect x="1963" y="32.3" width="30.4" height="30.4" rx="6.5" fill="#c2252c"/>
<rect x="1966.2" y="35.5" width="24" height="24" rx="4" fill="#ffffff" stroke="#a61c22" stroke-width="1.2"/>
<path d="M1970.5,40.3 L1978.5,47.5 L1970.5,54.7 Z M1978.5,40.3 L1986.5,47.5 L1978.5,54.7 Z" fill="#c2252c"/>
<path d="M2029.6,60.8 q-0.6,-2 2,-7 V45.2 a10.4,11.2 0 0 1 20.8,0 v8.6 q2.6,5 2,7 q-2.4,0.6 -4.4,-1.8 q-1.6,2.9 -3.8,2.9 q-2.2,0 -4.2,-2.9 q-2,2.9 -4.2,2.9 q-2.2,0 -3.8,-2.9 q-2,2.4 -4.4,1.8 Z" fill="#2bace2"/>
<ellipse cx="2039" cy="43.2" rx="2.1" ry="3.3" fill="#ffffff"/><ellipse cx="2045.3" cy="43.2" rx="2.1" ry="3.3" fill="#ffffff"/>
<path d="M2037.6,49.6 q4.6,4.2 9.2,0" fill="none" stroke="#ffffff" stroke-width="1.7" stroke-linecap="round"/>
<path d="M2093.6,40.4 q12.6,-10.6 25.2,0 q0.6,3.2 -2,6.2 l-7.4,8.6 v4.4 q-3.2,2.8 -6.4,0 v-4.4 l-7.4,-8.6 q-2.6,-3 -2,-6.2 Z" fill="#ffffff" stroke="#e9ebee" stroke-width="1.4"/>
<path d="M2095.8,40.6 q10.4,-8.4 20.8,0 q0,2.5 -1.9,4.6 l-6.8,7.6 v5.2 q-1.7,1.5 -3.4,0 v-5.2 l-6.8,-7.6 q-1.9,-2.1 -1.9,-4.6 Z" fill="url(#fun)"/>
<path d="M2104,37 q5,-2 9.6,1.2 q-2.2,6.4 -6.4,9 q-1.4,-6 -3.2,-10.2 Z" fill="url(#funhi)"/>
<circle cx="2169.9" cy="47.9" r="13.7" fill="#9c9c9c"/><rect x="2163.9" y="46.5" width="12.5" height="3" rx="0.8" fill="#ffffff"/>
<text x="2217.8" y="61.8" font-family='"Liberation Sans", sans-serif' font-weight="bold" font-size="12.6" fill="#84b821" stroke="#84b821" stroke-width="0.7" textLength="18" lengthAdjust="spacingAndGlyphs">Pd</text>
<path d="M2229.6,42.6 q5.5,-2.2 9.5,-5.6 q4.5,-3.4 10.6,-3.4 q-3.4,3.6 -3.6,8 q0.2,4 2.4,7.6 q-4.4,2.4 -8.4,0.6 q-2.6,-3.8 -10.5,-7.2 Z" fill="#a8683a"/>
<path d="M2236,44 q3,-1.6 5.4,-1 q1.6,2.6 0.4,5 q-3.2,-1.4 -5.8,-4 Z" fill="#f1c84b"/>
<path d="M2240.5,38 q3.4,-2.8 7,-3.6 q-2.4,3 -2.6,6.6 Z" fill="#c98b55"/>
<rect x="2238" y="52" width="24.2" height="23.8" rx="4.2" fill="#b3071b"/>
<rect x="2247.7" y="58.6" width="3.1" height="9.9" fill="#ffffff"/><rect x="2247.7" y="69.5" width="3.1" height="2.7" fill="#ffffff"/>
<rect x="2277.8" y="32" width="1.8" height="32" fill="#d2d4d7"/>
<path d="M2309.65,42.4 V38.6 a2,2 0 0 1 2,-2 H2336.4 a2,2 0 0 1 2,2 V57.3 a2,2 0 0 1 -2,2 H2327.2" fill="none" stroke="#5f6368" stroke-width="3.1"/>
<path d="M2308.1,52.6 a8.3,8.3 0 0 1 8.3,8.3 M2308.1,46.8 a14.1,14.1 0 0 1 14.1,14.1" fill="none" stroke="#5f6368" stroke-width="3"/>
<path d="M2308.1,57 a3.9,3.9 0 0 1 3.9,3.9 H2308.1 Z" fill="#5f6368"/>
<path d="M2374,37.6 H2390.2 M2374,45.5 H2390.2 M2374,53.4 H2383.4" stroke="#5f6368" stroke-width="2.9" stroke-linecap="round"/>
<path d="M2398.3,55 V37.6 H2402.4" fill="none" stroke="#5f6368" stroke-width="2.9" stroke-linecap="round" stroke-linejoin="round"/>
<circle cx="2393.8" cy="55" r="4.9" fill="#5f6368"/>
<circle cx="2452" cy="47.3" r="21.8" fill="#dedee1"/>
<clipPath id="avc"><circle cx="2452" cy="47.3" r="21.8"/></clipPath>
<g clip-path="url(#avc)">
<path d="M2446.6,70 q1.6,-5.2 0.4,-9.4 q-4,-5.6 -3.2,-13.6 q1,-8.8 8.2,-10.6 q6.8,-1.2 8.6,5.6 q1.2,5.4 -1.4,11.4 q-1.4,3.2 -1.4,7 q0,5 1.6,9.6 Z" fill="#f5f6f9"/>
<path d="M2458.6,41 q1.6,5.2 -0.6,11.6 q-2,4.6 -1.6,9.4 q0.4,4 1.4,8 l1.6,0 q-1.6,-4.6 -1.6,-9.6 q0,-3.8 1.4,-7 q2.6,-6 1.4,-11.4 q-0.6,-1.6 -2,-1 Z" fill="#d9dbe3"/>
<path d="M2447,60.6 q-2.4,3 -6,4.4 l2,4 q2.6,-2 4.4,-5 Z" fill="#e6e7ec"/>
</g>
<circle cx="2516" cy="37.9" r="3" fill="#5f6368"/>
<circle cx="2516" cy="47.9" r="3" fill="#5f6368"/>
<circle cx="2516" cy="58" r="3" fill="#5f6368"/>
</svg></body></html>
